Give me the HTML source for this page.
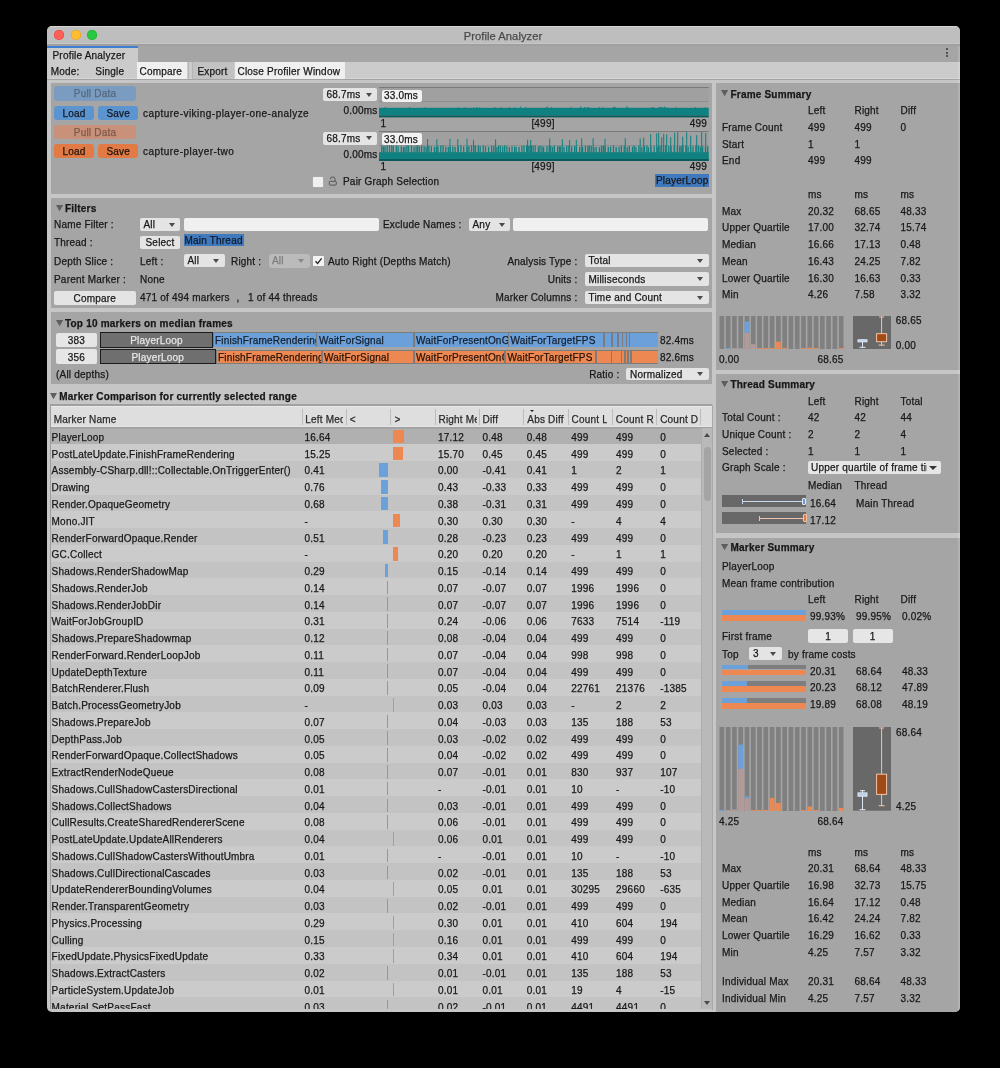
<!DOCTYPE html>
<html><head><meta charset="utf-8"><title>Profile Analyzer</title>
<style>
html,body{margin:0;padding:0;}
body{width:1000px;height:1068px;background:#000;position:relative;overflow:hidden;font-family:"Liberation Sans",sans-serif;font-size:10px;letter-spacing:0.2px;color:#181818;}
#win{position:absolute;left:47px;top:26px;width:913px;height:986px;border-radius:5px;overflow:hidden;background:#C6C6C6;}
#pg{position:absolute;left:-47px;top:-26px;width:1000px;height:1068px;will-change:transform;}
.a{position:absolute;}
.t{position:absolute;white-space:nowrap;-webkit-text-stroke:0.25px currentColor;}
.b{font-weight:bold;}

</style></head><body>
<div id="win"><div id="pg">
<div class="a" style="left:47px;top:26px;width:913.00px;height:18.30px;background:#BEBEBE;"></div>
<div class="a" style="left:47px;top:26px;width:913.00px;height:1.00px;background:#D6D6D6;"></div>
<div class="a" style="left:47px;top:43.4px;width:913.00px;height:0.90px;background:#C6C6C6;"></div>
<div class="a" style="left:47px;top:44.3px;width:913.00px;height:1.50px;background:#A0A0A0;"></div>
<div class="a" style="left:53.90px;top:30.10px;width:10px;height:10px;border-radius:50%;background:#FE5F57;box-shadow:inset 0 0 0 0.5px #E0443E;"></div>
<div class="a" style="left:70.65px;top:30.10px;width:10px;height:10px;border-radius:50%;background:#FEBC2E;box-shadow:inset 0 0 0 0.5px #DEA123;"></div>
<div class="a" style="left:87.40px;top:30.10px;width:10px;height:10px;border-radius:50%;background:#28C840;box-shadow:inset 0 0 0 0.5px #1AAB29;"></div>
<div class="t" style="left:400px;width:206.00px;top:29.50px;line-height:12px;text-align:center;font-size:11.2px;letter-spacing:0.05px;color:#4A4A4A;">Profile Analyzer</div>
<div class="a" style="left:47px;top:45.8px;width:913.00px;height:16.20px;background:#A5A5A5;"></div>
<div class="a" style="left:47px;top:47.6px;width:91.30px;height:14.40px;background:#CBCBCB;"></div>
<div class="a" style="left:47px;top:45.8px;width:91.30px;height:1.80px;background:#3F7FD0;"></div>
<div class="t" style="left:52.5px;top:49.90px;line-height:12px;">Profile Analyzer</div>
<div class="a" style="left:945.5px;top:48.10px;width:2.2px;height:2.2px;border-radius:50%;background:#3A3A3A;"></div>
<div class="a" style="left:945.5px;top:51.50px;width:2.2px;height:2.2px;border-radius:50%;background:#3A3A3A;"></div>
<div class="a" style="left:945.5px;top:54.90px;width:2.2px;height:2.2px;border-radius:50%;background:#3A3A3A;"></div>
<div class="a" style="left:47px;top:62px;width:913.00px;height:17.00px;background:#CBCBCB;"></div>
<div class="a" style="left:47px;top:77.6px;width:913.00px;height:0.90px;background:#D5D5D5;"></div>
<div class="a" style="left:47px;top:78.5px;width:913.00px;height:1.30px;background:#A3A3A3;"></div>
<div class="t" style="left:50.7px;top:66.30px;line-height:12px;">Mode:</div>
<div class="t" style="left:95.3px;top:66.00px;line-height:12px;">Single</div>
<div class="a" style="left:136.8px;top:62px;width:50.00px;height:17.00px;background:#EFEFEF;"></div>
<div class="t" style="left:139.5px;top:66.00px;line-height:12px;">Compare</div>
<div class="a" style="left:188px;top:62px;width:1.00px;height:17.00px;background:#B5B5B5;"></div>
<div class="a" style="left:192px;top:62px;width:1.00px;height:17.00px;background:#B5B5B5;"></div>
<div class="a" style="left:193px;top:62px;width:41.00px;height:17.00px;background:#C2C2C2;"></div>
<div class="t" style="left:197.5px;top:66.00px;line-height:12px;">Export</div>
<div class="a" style="left:235px;top:62px;width:110.20px;height:17.00px;background:#EFEFEF;"></div>
<div class="t" style="left:237.5px;top:66.00px;line-height:12px;">Close Profiler Window</div>
<div class="a" style="left:51px;top:83px;width:660.50px;height:110.50px;background:#A5A5A5;"></div>
<div class="a" style="left:51px;top:197.5px;width:660.50px;height:110.00px;background:#A5A5A5;"></div>
<div class="a" style="left:51px;top:312px;width:660.50px;height:72.00px;background:#A5A5A5;"></div>
<div class="a" style="left:716px;top:83px;width:244.00px;height:286.50px;background:#A5A5A5;"></div>
<div class="a" style="left:716px;top:374px;width:244.00px;height:159.00px;background:#A5A5A5;"></div>
<div class="a" style="left:716px;top:538px;width:244.00px;height:474.00px;background:#A5A5A5;"></div>
<div class="a" style="left:54px;top:86px;width:82.00px;height:14.50px;background:#7A9CC0;border-radius:3px;"></div>
<div class="t" style="left:54px;width:82.00px;top:88.15px;line-height:12px;text-align:center;color:#55687E;">Pull Data</div>
<div class="a" style="left:54px;top:105.5px;width:40.00px;height:14.30px;background:#5C94D0;border-radius:3px;"></div>
<div class="t" style="left:54px;width:40.00px;top:107.55px;line-height:12px;text-align:center;color:#141A22;">Load</div>
<div class="a" style="left:98.2px;top:105.5px;width:40.00px;height:14.30px;background:#5C94D0;border-radius:3px;"></div>
<div class="t" style="left:98.2px;width:40.00px;top:107.55px;line-height:12px;text-align:center;color:#141A22;">Save</div>
<div class="t" style="left:143px;top:107.8px;line-height:12px;width:166px;overflow:hidden;letter-spacing:0.47px;">capture-viking-player-one-analyzer</div>
<div class="a" style="left:54px;top:124.5px;width:82.00px;height:14.70px;background:#C9907A;border-radius:3px;"></div>
<div class="t" style="left:54px;width:82.00px;top:126.75px;line-height:12px;text-align:center;color:#7D5A4C;">Pull Data</div>
<div class="a" style="left:54px;top:144px;width:40.00px;height:14.00px;background:#E27A45;border-radius:3px;"></div>
<div class="t" style="left:54px;width:40.00px;top:145.90px;line-height:12px;text-align:center;color:#22140C;">Load</div>
<div class="a" style="left:98.2px;top:144px;width:40.00px;height:14.00px;background:#E27A45;border-radius:3px;"></div>
<div class="t" style="left:98.2px;width:40.00px;top:145.90px;line-height:12px;text-align:center;color:#22140C;">Save</div>
<div class="t" style="left:143px;top:146.00px;line-height:12px;letter-spacing:0.47px;">capture-player-two</div>
<svg class="a" style="left:378.8px;top:87.2px;" width="329.80" height="30.40" viewBox="0 0 329.80 30.40"><rect x="0" y="0" width="329.8" height="30.39999999999999" fill="#A0A0A0"/><rect x="0" y="0" width="329.8" height="1" fill="#7A7A7A"/><rect x="0" y="14.00" width="329.8" height="1" fill="#8E8E8E"/><rect x="0" y="20.80" width="329.8" height="7.60" fill="#0F8181"/><rect x="0" y="28.40" width="329.8" height="2" fill="#095A5A"/><rect x="78.78" y="20.13" width="1" height="1.17" fill="#0F8181"/><rect x="121.81" y="20.10" width="1" height="1.20" fill="#0F8181"/><rect x="205.18" y="20.37" width="1" height="0.93" fill="#0F8181"/><rect x="5.49" y="19.98" width="1" height="1.32" fill="#0F8181"/><rect x="85.75" y="20.28" width="1" height="1.02" fill="#0F8181"/><rect x="325.78" y="20.16" width="1" height="1.14" fill="#0F8181"/><rect x="273.89" y="20.16" width="1" height="1.14" fill="#0F8181"/><rect x="209.54" y="20.32" width="1" height="0.98" fill="#0F8181"/><rect x="208.16" y="19.97" width="1" height="1.33" fill="#0F8181"/><rect x="171.76" y="20.03" width="1" height="1.27" fill="#0F8181"/><rect x="220.08" y="20.37" width="1" height="0.93" fill="#0F8181"/><rect x="248.38" y="20.10" width="1" height="1.20" fill="#0F8181"/><rect x="99.41" y="20.38" width="1" height="0.92" fill="#0F8181"/><rect x="283.36" y="20.16" width="1" height="1.14" fill="#0F8181"/><rect x="235.54" y="19.96" width="1" height="1.34" fill="#0F8181"/><rect x="234.01" y="19.94" width="1" height="1.36" fill="#0F8181"/><rect x="129.96" y="20.00" width="1" height="1.30" fill="#0F8181"/><rect x="146.15" y="19.93" width="1" height="1.37" fill="#0F8181"/><rect x="287.71" y="20.35" width="1" height="0.95" fill="#0F8181"/><rect x="45.53" y="20.29" width="1" height="1.01" fill="#0F8181"/><rect x="315.95" y="20.18" width="1" height="1.12" fill="#0F8181"/><rect x="205.49" y="20.25" width="1" height="1.05" fill="#0F8181"/><rect x="166.56" y="20.21" width="1" height="1.09" fill="#0F8181"/><rect x="115.60" y="20.11" width="1" height="1.19" fill="#0F8181"/><rect x="191.67" y="19.95" width="1" height="1.35" fill="#0F8181"/><rect x="223.53" y="19.94" width="1" height="1.36" fill="#0F8181"/><rect x="280.39" y="19.90" width="1" height="1.40" fill="#0F8181"/><rect x="220.04" y="20.32" width="1" height="0.98" fill="#0F8181"/><rect x="281.77" y="19.92" width="1" height="1.38" fill="#0F8181"/><rect x="296.13" y="20.12" width="1" height="1.18" fill="#0F8181"/><rect x="233.90" y="20.29" width="1" height="1.01" fill="#0F8181"/><rect x="272.30" y="20.11" width="1" height="1.19" fill="#0F8181"/><rect x="94.10" y="20.37" width="1" height="0.93" fill="#0F8181"/><rect x="279.59" y="19.91" width="1" height="1.39" fill="#0F8181"/><rect x="30.06" y="20.00" width="1" height="1.30" fill="#0F8181"/><rect x="135.01" y="20.32" width="1" height="0.98" fill="#0F8181"/><rect x="97.01" y="20.02" width="1" height="1.28" fill="#0F8181"/><rect x="285.72" y="20.38" width="1" height="0.92" fill="#0F8181"/><rect x="201.54" y="20.38" width="1" height="0.92" fill="#0F8181"/><rect x="235.41" y="20.23" width="1" height="1.07" fill="#0F8181"/><rect x="141.20" y="19.40" width="0.8" height="1.90" fill="#0F8181"/><rect x="168.20" y="19.40" width="0.8" height="1.90" fill="#0F8181"/><rect x="201.20" y="19.40" width="0.8" height="1.90" fill="#0F8181"/><rect x="247.20" y="19.40" width="0.8" height="1.90" fill="#0F8181"/><rect x="285.20" y="19.40" width="0.8" height="1.90" fill="#0F8181"/></svg>
<svg class="a" style="left:378.8px;top:131px;" width="329.80" height="30.00" viewBox="0 0 329.80 30.00"><rect x="0" y="0" width="329.8" height="30" fill="#A0A0A0"/><rect x="0" y="0" width="329.8" height="1" fill="#7A7A7A"/><rect x="0" y="14.00" width="329.8" height="1" fill="#8E8E8E"/><rect x="0" y="21.20" width="329.8" height="6.80" fill="#0F8181"/><rect x="0" y="28.00" width="329.8" height="2" fill="#095A5A"/><rect x="2.20" y="14.88" width="1.3" height="6.82" fill="#0F8181"/><rect x="3.89" y="15.47" width="1.3" height="6.23" fill="#0F8181"/><rect x="5.42" y="15.26" width="1.3" height="6.44" fill="#0F8181"/><rect x="7.52" y="14.40" width="1.3" height="7.30" fill="#0F8181"/><rect x="9.88" y="14.37" width="1.3" height="7.33" fill="#0F8181"/><rect x="12.11" y="14.43" width="1.3" height="7.27" fill="#0F8181"/><rect x="13.68" y="15.06" width="1.3" height="6.64" fill="#0F8181"/><rect x="16.65" y="14.52" width="1.3" height="7.18" fill="#0F8181"/><rect x="18.47" y="15.43" width="1.3" height="6.27" fill="#0F8181"/><rect x="21.68" y="15.34" width="1.3" height="6.36" fill="#0F8181"/><rect x="23.83" y="16.06" width="1.3" height="5.64" fill="#0F8181"/><rect x="25.32" y="15.85" width="1.3" height="5.85" fill="#0F8181"/><rect x="27.27" y="14.56" width="1.3" height="7.14" fill="#0F8181"/><rect x="28.89" y="14.86" width="1.3" height="6.84" fill="#0F8181"/><rect x="31.84" y="14.63" width="1.3" height="7.07" fill="#0F8181"/><rect x="34.35" y="15.45" width="1.3" height="6.25" fill="#0F8181"/><rect x="36.45" y="15.29" width="1.3" height="6.41" fill="#0F8181"/><rect x="37.97" y="14.41" width="1.3" height="7.29" fill="#0F8181"/><rect x="39.77" y="15.52" width="1.3" height="6.18" fill="#0F8181"/><rect x="41.98" y="14.87" width="1.3" height="6.83" fill="#0F8181"/><rect x="44.49" y="15.12" width="1.3" height="6.58" fill="#0F8181"/><rect x="46.46" y="15.73" width="1.3" height="5.97" fill="#0F8181"/><rect x="49.19" y="14.74" width="1.3" height="6.96" fill="#0F8181"/><rect x="51.68" y="15.25" width="1.3" height="6.45" fill="#0F8181"/><rect x="54.74" y="15.61" width="1.3" height="6.09" fill="#0F8181"/><rect x="56.69" y="16.06" width="1.3" height="5.64" fill="#0F8181"/><rect x="58.31" y="15.05" width="1.3" height="6.65" fill="#0F8181"/><rect x="61.15" y="14.57" width="1.3" height="7.13" fill="#0F8181"/><rect x="63.48" y="14.37" width="1.3" height="7.33" fill="#0F8181"/><rect x="66.15" y="15.68" width="1.3" height="6.02" fill="#0F8181"/><rect x="68.64" y="15.88" width="1.3" height="5.82" fill="#0F8181"/><rect x="70.64" y="15.55" width="1.3" height="6.15" fill="#0F8181"/><rect x="73.16" y="15.34" width="1.3" height="6.36" fill="#0F8181"/><rect x="75.43" y="15.81" width="1.3" height="5.89" fill="#0F8181"/><rect x="78.63" y="15.15" width="1.3" height="6.55" fill="#0F8181"/><rect x="81.29" y="14.41" width="1.3" height="7.29" fill="#0F8181"/><rect x="84.02" y="15.46" width="1.3" height="6.24" fill="#0F8181"/><rect x="87.31" y="15.78" width="1.3" height="5.92" fill="#0F8181"/><rect x="89.25" y="14.99" width="1.3" height="6.71" fill="#0F8181"/><rect x="91.92" y="14.34" width="1.3" height="7.36" fill="#0F8181"/><rect x="94.20" y="14.60" width="1.3" height="7.10" fill="#0F8181"/><rect x="95.82" y="14.41" width="1.3" height="7.29" fill="#0F8181"/><rect x="98.68" y="14.53" width="1.3" height="7.17" fill="#0F8181"/><rect x="100.55" y="15.00" width="1.3" height="6.70" fill="#0F8181"/><rect x="103.60" y="14.45" width="1.3" height="7.25" fill="#0F8181"/><rect x="105.86" y="15.29" width="1.3" height="6.41" fill="#0F8181"/><rect x="108.94" y="15.77" width="1.3" height="5.93" fill="#0F8181"/><rect x="111.98" y="14.80" width="1.3" height="6.90" fill="#0F8181"/><rect x="114.17" y="14.95" width="1.3" height="6.75" fill="#0F8181"/><rect x="117.25" y="16.02" width="1.3" height="5.68" fill="#0F8181"/><rect x="118.93" y="14.62" width="1.3" height="7.08" fill="#0F8181"/><rect x="120.77" y="14.72" width="1.3" height="6.98" fill="#0F8181"/><rect x="123.10" y="15.36" width="1.3" height="6.34" fill="#0F8181"/><rect x="125.00" y="14.31" width="1.3" height="7.39" fill="#0F8181"/><rect x="127.19" y="14.96" width="1.3" height="6.74" fill="#0F8181"/><rect x="129.67" y="16.02" width="1.3" height="5.68" fill="#0F8181"/><rect x="132.38" y="15.23" width="1.3" height="6.47" fill="#0F8181"/><rect x="134.95" y="15.52" width="1.3" height="6.18" fill="#0F8181"/><rect x="136.46" y="15.92" width="1.3" height="5.78" fill="#0F8181"/><rect x="139.34" y="15.87" width="1.3" height="5.83" fill="#0F8181"/><rect x="142.25" y="15.01" width="1.3" height="6.69" fill="#0F8181"/><rect x="144.41" y="14.49" width="1.3" height="7.21" fill="#0F8181"/><rect x="147.02" y="14.41" width="1.3" height="7.29" fill="#0F8181"/><rect x="148.54" y="14.68" width="1.3" height="7.02" fill="#0F8181"/><rect x="150.25" y="14.91" width="1.3" height="6.79" fill="#0F8181"/><rect x="151.75" y="14.30" width="1.3" height="7.40" fill="#0F8181"/><rect x="153.44" y="14.48" width="1.3" height="7.22" fill="#0F8181"/><rect x="155.53" y="14.35" width="1.3" height="7.35" fill="#0F8181"/><rect x="158.59" y="15.41" width="1.3" height="6.29" fill="#0F8181"/><rect x="160.27" y="14.75" width="1.3" height="6.95" fill="#0F8181"/><rect x="162.33" y="14.96" width="1.3" height="6.74" fill="#0F8181"/><rect x="163.97" y="15.83" width="1.3" height="5.87" fill="#0F8181"/><rect x="167.25" y="15.14" width="1.3" height="6.56" fill="#0F8181"/><rect x="169.57" y="14.45" width="1.3" height="7.25" fill="#0F8181"/><rect x="171.17" y="14.92" width="1.3" height="6.78" fill="#0F8181"/><rect x="173.07" y="15.79" width="1.3" height="5.91" fill="#0F8181"/><rect x="174.78" y="14.34" width="1.3" height="7.36" fill="#0F8181"/><rect x="177.99" y="15.25" width="1.3" height="6.45" fill="#0F8181"/><rect x="179.66" y="15.28" width="1.3" height="6.42" fill="#0F8181"/><rect x="181.11" y="15.25" width="1.3" height="6.45" fill="#0F8181"/><rect x="184.37" y="15.85" width="1.3" height="5.85" fill="#0F8181"/><rect x="187.10" y="14.77" width="1.3" height="6.93" fill="#0F8181"/><rect x="189.19" y="14.60" width="1.3" height="7.10" fill="#0F8181"/><rect x="192.06" y="15.26" width="1.3" height="6.44" fill="#0F8181"/><rect x="194.94" y="14.89" width="1.3" height="6.81" fill="#0F8181"/><rect x="196.76" y="15.76" width="1.3" height="5.94" fill="#0F8181"/><rect x="200.04" y="15.83" width="1.3" height="5.87" fill="#0F8181"/><rect x="202.97" y="15.77" width="1.3" height="5.93" fill="#0F8181"/><rect x="205.77" y="14.71" width="1.3" height="6.99" fill="#0F8181"/><rect x="208.16" y="14.94" width="1.3" height="6.76" fill="#0F8181"/><rect x="209.61" y="14.35" width="1.3" height="7.35" fill="#0F8181"/><rect x="211.54" y="14.77" width="1.3" height="6.93" fill="#0F8181"/><rect x="214.26" y="16.02" width="1.3" height="5.68" fill="#0F8181"/><rect x="216.51" y="15.99" width="1.3" height="5.71" fill="#0F8181"/><rect x="219.79" y="16.02" width="1.3" height="5.68" fill="#0F8181"/><rect x="221.88" y="14.70" width="1.3" height="7.00" fill="#0F8181"/><rect x="223.71" y="14.65" width="1.3" height="7.05" fill="#0F8181"/><rect x="225.50" y="15.42" width="1.3" height="6.28" fill="#0F8181"/><rect x="228.61" y="15.81" width="1.3" height="5.89" fill="#0F8181"/><rect x="230.92" y="15.48" width="1.3" height="6.22" fill="#0F8181"/><rect x="233.84" y="14.45" width="1.3" height="7.25" fill="#0F8181"/><rect x="236.49" y="15.94" width="1.3" height="5.76" fill="#0F8181"/><rect x="239.38" y="15.65" width="1.3" height="6.05" fill="#0F8181"/><rect x="241.69" y="14.62" width="1.3" height="7.08" fill="#0F8181"/><rect x="244.59" y="14.90" width="1.3" height="6.80" fill="#0F8181"/><rect x="247.51" y="16.05" width="1.3" height="5.65" fill="#0F8181"/><rect x="249.66" y="15.02" width="1.3" height="6.68" fill="#0F8181"/><rect x="252.86" y="15.60" width="1.3" height="6.10" fill="#0F8181"/><rect x="254.58" y="14.53" width="1.3" height="7.17" fill="#0F8181"/><rect x="256.27" y="15.93" width="1.3" height="5.77" fill="#0F8181"/><rect x="259.20" y="14.56" width="1.3" height="7.14" fill="#0F8181"/><rect x="262.17" y="16.06" width="1.3" height="5.64" fill="#0F8181"/><rect x="264.82" y="14.93" width="1.3" height="6.77" fill="#0F8181"/><rect x="267.26" y="14.54" width="1.3" height="7.16" fill="#0F8181"/><rect x="268.69" y="16.05" width="1.3" height="5.65" fill="#0F8181"/><rect x="271.33" y="15.25" width="1.3" height="6.45" fill="#0F8181"/><rect x="274.50" y="15.08" width="1.3" height="6.62" fill="#0F8181"/><rect x="277.56" y="15.79" width="1.3" height="5.91" fill="#0F8181"/><rect x="279.36" y="14.75" width="1.3" height="6.95" fill="#0F8181"/><rect x="281.31" y="14.73" width="1.3" height="6.97" fill="#0F8181"/><rect x="283.83" y="14.77" width="1.3" height="6.93" fill="#0F8181"/><rect x="286.02" y="14.54" width="1.3" height="7.16" fill="#0F8181"/><rect x="289.15" y="14.94" width="1.3" height="6.76" fill="#0F8181"/><rect x="291.42" y="15.35" width="1.3" height="6.35" fill="#0F8181"/><rect x="294.54" y="15.06" width="1.3" height="6.64" fill="#0F8181"/><rect x="297.69" y="15.20" width="1.3" height="6.50" fill="#0F8181"/><rect x="300.10" y="15.24" width="1.3" height="6.46" fill="#0F8181"/><rect x="301.53" y="15.09" width="1.3" height="6.61" fill="#0F8181"/><rect x="303.28" y="14.31" width="1.3" height="7.39" fill="#0F8181"/><rect x="306.20" y="14.61" width="1.3" height="7.09" fill="#0F8181"/><rect x="308.50" y="15.61" width="1.3" height="6.09" fill="#0F8181"/><rect x="310.95" y="14.89" width="1.3" height="6.81" fill="#0F8181"/><rect x="313.34" y="15.30" width="1.3" height="6.40" fill="#0F8181"/><rect x="316.23" y="14.49" width="1.3" height="7.21" fill="#0F8181"/><rect x="318.69" y="14.75" width="1.3" height="6.95" fill="#0F8181"/><rect x="320.62" y="15.69" width="1.3" height="6.01" fill="#0F8181"/><rect x="322.98" y="15.31" width="1.3" height="6.39" fill="#0F8181"/><rect x="325.83" y="15.94" width="1.3" height="5.76" fill="#0F8181"/><rect x="328.07" y="15.40" width="1.3" height="6.30" fill="#0F8181"/><rect x="48.10" y="8.02" width="1" height="13.68" fill="#0F8181"/><rect x="57.40" y="8.39" width="1" height="13.31" fill="#0F8181"/><rect x="70.50" y="7.90" width="1" height="13.80" fill="#0F8181"/><rect x="78.30" y="8.07" width="1" height="13.63" fill="#0F8181"/><rect x="87.50" y="7.96" width="1" height="13.74" fill="#0F8181"/><rect x="94.00" y="8.88" width="1" height="12.82" fill="#0F8181"/><rect x="116.10" y="8.40" width="1" height="13.30" fill="#0F8181"/><rect x="148.10" y="8.75" width="1" height="12.95" fill="#0F8181"/><rect x="151.20" y="8.88" width="1" height="12.82" fill="#0F8181"/><rect x="170.20" y="7.52" width="1" height="14.18" fill="#0F8181"/><rect x="182.80" y="8.12" width="1" height="13.58" fill="#0F8181"/><rect x="190.20" y="8.89" width="1" height="12.81" fill="#0F8181"/><rect x="196.80" y="8.68" width="1" height="13.02" fill="#0F8181"/><rect x="202.20" y="7.27" width="1" height="14.43" fill="#0F8181"/><rect x="213.60" y="7.24" width="1" height="14.46" fill="#0F8181"/><rect x="225.50" y="7.88" width="1" height="13.82" fill="#0F8181"/><rect x="245.70" y="7.15" width="1" height="14.55" fill="#0F8181"/><rect x="260.70" y="7.48" width="1" height="14.22" fill="#0F8181"/><rect x="264.20" y="6.56" width="1" height="15.14" fill="#0F8181"/><rect x="271.20" y="2.98" width="1" height="18.72" fill="#0F8181"/><rect x="277.20" y="2.30" width="1" height="19.40" fill="#0F8181"/><rect x="279.20" y="1.62" width="1" height="20.08" fill="#0F8181"/><rect x="282.20" y="6.07" width="1" height="15.63" fill="#0F8181"/><rect x="284.20" y="2.70" width="1" height="19.00" fill="#0F8181"/><rect x="287.20" y="3.04" width="1" height="18.66" fill="#0F8181"/><rect x="291.20" y="6.14" width="1" height="15.56" fill="#0F8181"/><rect x="295.20" y="1.70" width="1" height="20.00" fill="#0F8181"/><rect x="298.20" y="1.19" width="1" height="20.51" fill="#0F8181"/><rect x="303.20" y="5.68" width="1" height="16.02" fill="#0F8181"/><rect x="307.20" y="1.28" width="1" height="20.42" fill="#0F8181"/><rect x="311.20" y="4.61" width="1" height="17.09" fill="#0F8181"/><rect x="317.20" y="4.08" width="1" height="17.62" fill="#0F8181"/><rect x="322.20" y="1.06" width="1" height="20.64" fill="#0F8181"/><rect x="326.20" y="2.01" width="1" height="19.69" fill="#0F8181"/></svg>
<div class="a" style="left:323px;top:88px;width:54.00px;height:13.00px;background:#E4E4E4;border-radius:2px;"></div>
<div class="t" style="left:326.5px;top:89.40px;line-height:12px;color:#181818;">68.7ms</div>
<div class="a" style="left:365.60px;top:92.90px;width:0;height:0;border-left:3.6px solid transparent;border-right:3.6px solid transparent;border-top:4px solid #4A4A4A;"></div>
<div class="a" style="left:323px;top:131.5px;width:54.00px;height:13.00px;background:#E4E4E4;border-radius:2px;"></div>
<div class="t" style="left:326.5px;top:132.90px;line-height:12px;color:#181818;">68.7ms</div>
<div class="a" style="left:365.60px;top:136.40px;width:0;height:0;border-left:3.6px solid transparent;border-right:3.6px solid transparent;border-top:4px solid #4A4A4A;"></div>
<div class="a" style="left:382px;top:89.6px;width:39.6px;height:12px;background:#F2F2F2;border-radius:2px;"></div>
<div class="t" style="left:384px;top:90.10px;line-height:12px;">33.0ms</div>
<div class="a" style="left:382px;top:133px;width:39.6px;height:12px;background:#F2F2F2;border-radius:2px;"></div>
<div class="t" style="left:384px;top:133.50px;line-height:12px;">33.0ms</div>
<div class="t" style="right:622.50px;top:105.00px;line-height:12px;text-align:right;">0.00ms</div>
<div class="t" style="right:622.50px;top:148.50px;line-height:12px;text-align:right;">0.00ms</div>
<div class="t" style="left:380.5px;top:117.70px;line-height:12px;">1</div>
<div class="t" style="left:380.5px;top:161.20px;line-height:12px;">1</div>
<div class="t" style="left:503px;width:80.00px;top:117.70px;line-height:12px;text-align:center;">[499]</div>
<div class="t" style="left:503px;width:80.00px;top:161.20px;line-height:12px;text-align:center;">[499]</div>
<div class="t" style="right:293.00px;top:117.70px;line-height:12px;text-align:right;">499</div>
<div class="t" style="right:293.00px;top:161.20px;line-height:12px;text-align:right;">499</div>
<div class="a" style="left:312.5px;top:176.9px;width:10.2px;height:9.8px;background:#F0F0F0;border-radius:0.8px;box-shadow:0 0 0 0.6px #B0B0B0;"></div>
<svg class="a" style="left:327px;top:175px;" width="11" height="12" viewBox="0 0 11 12"><path d="M3.3 4.3 A2.4 2.4 0 0 1 8.1 4.3 V6.3" fill="none" stroke="#555" stroke-width="1"/><rect x="2.3" y="6.3" width="7" height="3.8" rx="1" fill="none" stroke="#555" stroke-width="1"/></svg>
<div class="t" style="left:343px;top:176.00px;line-height:12px;">Pair Graph Selection</div>
<div class="a" style="left:655px;top:174px;width:54px;height:12.7px;background:#4079BE;"></div>
<div class="t" style="left:656px;top:175.10px;line-height:12px;">PlayerLoop</div>
<svg class="a" style="left:55.60px;top:205.05px;" width="7.2" height="6.3" viewBox="0 0 7.2 6.3"><path d="M0 0 H7.2 L3.6 6.3 Z" fill="#5E5E5E"/></svg>
<div class="t b" style="left:65px;top:202.70px;line-height:12px;">Filters</div>
<div class="t" style="left:54px;top:219.30px;line-height:12px;">Name Filter :</div>
<div class="a" style="left:140px;top:218px;width:40.00px;height:13.00px;background:#E4E4E4;border-radius:2px;"></div>
<div class="t" style="left:143.5px;top:219.40px;line-height:12px;color:#181818;">All</div>
<div class="a" style="left:168.60px;top:222.90px;width:0;height:0;border-left:3.6px solid transparent;border-right:3.6px solid transparent;border-top:4px solid #4A4A4A;"></div>
<div class="a" style="left:184px;top:217.5px;width:195.00px;height:13.50px;background:#F0F0F0;border-radius:2px;"></div>
<div class="t" style="left:383px;top:219.30px;line-height:12px;">Exclude Names :</div>
<div class="a" style="left:469px;top:218px;width:41.00px;height:13.00px;background:#E4E4E4;border-radius:2px;"></div>
<div class="t" style="left:472.5px;top:219.40px;line-height:12px;color:#181818;">Any</div>
<div class="a" style="left:498.60px;top:222.90px;width:0;height:0;border-left:3.6px solid transparent;border-right:3.6px solid transparent;border-top:4px solid #4A4A4A;"></div>
<div class="a" style="left:513px;top:218px;width:194.50px;height:13.00px;background:#F0F0F0;border-radius:2px;"></div>
<div class="t" style="left:54px;top:236.50px;line-height:12px;">Thread :</div>
<div class="a" style="left:140px;top:235.7px;width:40.00px;height:13.00px;background:#E4E4E4;border-radius:2px;"></div>
<div class="t" style="left:140px;width:40.00px;top:237.10px;line-height:12px;text-align:center;">Select</div>
<div class="a" style="left:184px;top:234px;width:60.00px;height:11.50px;background:#4079BE;"></div>
<div class="t" style="left:184.5px;top:234.70px;line-height:12px;color:#0E1A2A;">Main Thread</div>
<div class="t" style="left:54px;top:255.90px;line-height:12px;">Depth Slice :</div>
<div class="t" style="left:140px;top:255.90px;line-height:12px;">Left :</div>
<div class="a" style="left:184px;top:254px;width:40.50px;height:13.00px;background:#E4E4E4;border-radius:2px;"></div>
<div class="t" style="left:187.5px;top:255.40px;line-height:12px;color:#181818;">All</div>
<div class="a" style="left:213.10px;top:258.90px;width:0;height:0;border-left:3.6px solid transparent;border-right:3.6px solid transparent;border-top:4px solid #4A4A4A;"></div>
<div class="t" style="left:231px;top:255.90px;line-height:12px;">Right :</div>
<div class="a" style="left:268.5px;top:253.5px;width:41.00px;height:14.00px;background:#BBBBBB;border-radius:3px;"></div>
<div class="t" style="left:272.0px;top:255.40px;line-height:12px;color:#7C7C7C;">All</div>
<div class="a" style="left:298.10px;top:258.90px;width:0;height:0;border-left:3.6px solid transparent;border-right:3.6px solid transparent;border-top:4px solid #888888;"></div>
<div class="a" style="left:313px;top:255.5px;width:10.70px;height:10.10px;background:#F4F4F4;border-radius:0.8px;"></div>
<svg class="a" style="left:313px;top:255.5px;" width="11" height="10" viewBox="0 0 11 10"><path d="M2.5 5.2 L4.6 7.4 L8.6 2.4" fill="none" stroke="#222" stroke-width="1.3"/></svg>
<div class="t" style="left:328px;top:255.90px;line-height:12px;">Auto Right (Depths Match)</div>
<div class="t" style="right:422.50px;top:255.50px;line-height:12px;text-align:right;">Analysis Type :</div>
<div class="a" style="left:584.5px;top:253.75px;width:124.25px;height:13.25px;background:#E4E4E4;border-radius:2px;"></div>
<div class="t" style="left:588.5px;top:255.27px;line-height:12px;color:#181818;">Total</div>
<div class="a" style="left:697.35px;top:258.77px;width:0;height:0;border-left:3.6px solid transparent;border-right:3.6px solid transparent;border-top:4px solid #4A4A4A;"></div>
<div class="t" style="right:422.50px;top:273.70px;line-height:12px;text-align:right;">Units :</div>
<div class="a" style="left:584.5px;top:272px;width:124.25px;height:13.50px;background:#E4E4E4;border-radius:2px;"></div>
<div class="t" style="left:588.5px;top:273.65px;line-height:12px;color:#181818;">Milliseconds</div>
<div class="a" style="left:697.35px;top:277.15px;width:0;height:0;border-left:3.6px solid transparent;border-right:3.6px solid transparent;border-top:4px solid #4A4A4A;"></div>
<div class="t" style="right:422.50px;top:292.20px;line-height:12px;text-align:right;">Marker Columns :</div>
<div class="a" style="left:584.5px;top:290.75px;width:124.25px;height:13.00px;background:#E4E4E4;border-radius:2px;"></div>
<div class="t" style="left:588.5px;top:292.15px;line-height:12px;color:#181818;">Time and Count</div>
<div class="a" style="left:697.35px;top:295.65px;width:0;height:0;border-left:3.6px solid transparent;border-right:3.6px solid transparent;border-top:4px solid #4A4A4A;"></div>
<div class="t" style="left:54px;top:274.40px;line-height:12px;">Parent Marker :</div>
<div class="t" style="left:140px;top:274.40px;line-height:12px;">None</div>
<div class="a" style="left:54px;top:291px;width:81.50px;height:14.00px;background:#E4E4E4;border-radius:2px;"></div>
<div class="t" style="left:54px;width:81.50px;top:292.90px;line-height:12px;text-align:center;">Compare</div>
<div class="t" style="left:140px;top:292.40px;line-height:12px;">471 of 494 markers</div>
<div class="t" style="left:236.5px;top:292.40px;line-height:12px;">,</div>
<div class="t" style="left:248px;top:292.40px;line-height:12px;">1 of 44 threads</div>
<svg class="a" style="left:55.60px;top:320.45px;" width="7.2" height="6.3" viewBox="0 0 7.2 6.3"><path d="M0 0 H7.2 L3.6 6.3 Z" fill="#5E5E5E"/></svg>
<div class="t b" style="left:65px;top:318.10px;line-height:12px;">Top 10 markers on median frames</div>
<div class="a" style="left:56.4px;top:333.4px;width:40.20px;height:14.00px;background:#E6E6E6;border-radius:2px;"></div>
<div class="t" style="left:56.4px;width:40.20px;top:335.30px;line-height:12px;text-align:center;">383</div>
<div class="a" style="left:56.4px;top:349.4px;width:40.20px;height:15.00px;background:#E6E6E6;border-radius:2px;"></div>
<div class="t" style="left:56.4px;width:40.20px;top:351.80px;line-height:12px;text-align:center;">356</div>
<div class="a" style="left:213px;top:332px;width:445.20px;height:15.40px;background:#7C7C7C;"></div>
<div class="t" style="left:213.5px;top:332.90px;width:102.30px;height:13.80px;background:#6CA0DA;overflow:hidden;line-height:15.40px;color:#14202E;padding-left:1.5px;box-sizing:border-box;">FinishFrameRendering</div>
<div class="t" style="left:317.4px;top:332.90px;width:95.60px;height:13.80px;background:#6CA0DA;overflow:hidden;line-height:15.40px;color:#14202E;padding-left:1.5px;box-sizing:border-box;">WaitForSignal</div>
<div class="t" style="left:414.5px;top:332.90px;width:93.10px;height:13.80px;background:#6CA0DA;overflow:hidden;line-height:15.40px;color:#14202E;padding-left:1.5px;box-sizing:border-box;">WaitForPresentOnGfxThread</div>
<div class="t" style="left:509px;top:332.90px;width:94.20px;height:13.80px;background:#6CA0DA;overflow:hidden;line-height:15.40px;color:#14202E;padding-left:1.5px;box-sizing:border-box;">WaitForTargetFPS</div>
<div class="t" style="left:604.8px;top:332.90px;width:6.70px;height:13.80px;background:#6CA0DA;overflow:hidden;line-height:15.40px;color:#14202E;padding-left:1.5px;box-sizing:border-box;"></div>
<div class="t" style="left:612.9px;top:332.90px;width:4.50px;height:13.80px;background:#6CA0DA;overflow:hidden;line-height:15.40px;color:#14202E;padding-left:1.5px;box-sizing:border-box;"></div>
<div class="t" style="left:618.9px;top:332.90px;width:3.00px;height:13.80px;background:#6CA0DA;overflow:hidden;line-height:15.40px;color:#14202E;padding-left:1.5px;box-sizing:border-box;"></div>
<div class="t" style="left:623px;top:332.90px;width:3.10px;height:13.80px;background:#6CA0DA;overflow:hidden;line-height:15.40px;color:#14202E;padding-left:1.5px;box-sizing:border-box;"></div>
<div class="t" style="left:627px;top:332.90px;width:1.60px;height:13.80px;background:#6CA0DA;overflow:hidden;line-height:15.40px;color:#14202E;padding-left:1.5px;box-sizing:border-box;"></div>
<div class="t" style="left:630px;top:332.90px;width:28.20px;height:13.80px;background:#6CA0DA;overflow:hidden;line-height:15.40px;color:#14202E;padding-left:1.5px;box-sizing:border-box;"></div>
<div class="a" style="left:215.6px;top:349.6px;width:442.60px;height:14.40px;background:#7C7C7C;"></div>
<div class="t" style="left:216.5px;top:350.50px;width:104.80px;height:12.80px;background:#EE8852;overflow:hidden;line-height:14.40px;color:#2A1408;padding-left:1.5px;box-sizing:border-box;">FinishFrameRendering</div>
<div class="t" style="left:322.6px;top:350.50px;width:90.90px;height:12.80px;background:#EE8852;overflow:hidden;line-height:14.40px;color:#2A1408;padding-left:1.5px;box-sizing:border-box;">WaitForSignal</div>
<div class="t" style="left:414.5px;top:350.50px;width:89.50px;height:12.80px;background:#EE8852;overflow:hidden;line-height:14.40px;color:#2A1408;padding-left:1.5px;box-sizing:border-box;">WaitForPresentOnGfxThread</div>
<div class="t" style="left:506px;top:350.50px;width:88.90px;height:12.80px;background:#EE8852;overflow:hidden;line-height:14.40px;color:#2A1408;padding-left:1.5px;box-sizing:border-box;">WaitForTargetFPS</div>
<div class="t" style="left:596.5px;top:350.50px;width:14.40px;height:12.80px;background:#EE8852;overflow:hidden;line-height:14.40px;color:#2A1408;padding-left:1.5px;box-sizing:border-box;"></div>
<div class="t" style="left:612.2px;top:350.50px;width:8.80px;height:12.80px;background:#EE8852;overflow:hidden;line-height:14.40px;color:#2A1408;padding-left:1.5px;box-sizing:border-box;"></div>
<div class="t" style="left:622.2px;top:350.50px;width:1.90px;height:12.80px;background:#EE8852;overflow:hidden;line-height:14.40px;color:#2A1408;padding-left:1.5px;box-sizing:border-box;"></div>
<div class="t" style="left:625.8px;top:350.50px;width:1.70px;height:12.80px;background:#EE8852;overflow:hidden;line-height:14.40px;color:#2A1408;padding-left:1.5px;box-sizing:border-box;"></div>
<div class="t" style="left:628.9px;top:350.50px;width:1.10px;height:12.80px;background:#EE8852;overflow:hidden;line-height:14.40px;color:#2A1408;padding-left:1.5px;box-sizing:border-box;"></div>
<div class="t" style="left:631.5px;top:350.50px;width:26.70px;height:12.80px;background:#EE8852;overflow:hidden;line-height:14.40px;color:#2A1408;padding-left:1.5px;box-sizing:border-box;"></div>
<div class="a" style="left:100px;top:332.4px;width:113.00px;height:15.20px;background:#6F6F6F;box-sizing:border-box;border:1px solid #1C1C1C;"></div>
<div class="t" style="left:100px;width:113.00px;top:335.00px;line-height:12px;text-align:center;color:#E6E6E6;">PlayerLoop</div>
<div class="a" style="left:100px;top:349.4px;width:115.60px;height:15.00px;background:#6F6F6F;box-sizing:border-box;border:1px solid #1C1C1C;"></div>
<div class="t" style="left:100px;width:115.60px;top:351.90px;line-height:12px;text-align:center;color:#E6E6E6;">PlayerLoop</div>
<div class="t" style="left:660px;top:334.90px;line-height:12px;">82.4ms</div>
<div class="t" style="left:660px;top:351.90px;line-height:12px;">82.6ms</div>
<div class="t" style="left:56px;top:368.90px;line-height:12px;">(All depths)</div>
<div class="t" style="right:380.50px;top:368.90px;line-height:12px;text-align:right;">Ratio :</div>
<div class="a" style="left:626px;top:367.7px;width:82.60px;height:12.70px;background:#E4E4E4;border-radius:2px;"></div>
<div class="t" style="left:630px;top:368.95px;line-height:12px;color:#181818;">Normalized</div>
<div class="a" style="left:697.20px;top:372.45px;width:0;height:0;border-left:3.6px solid transparent;border-right:3.6px solid transparent;border-top:4px solid #4A4A4A;"></div>
<svg class="a" style="left:49.60px;top:393.05px;" width="7" height="6.3" viewBox="0 0 7 6.3"><path d="M0 0 H7 L3.5 6.3 Z" fill="#5E5E5E"/></svg>
<div class="t b" style="left:59.3px;top:390.90px;line-height:12px;">Marker Comparison for currently selected range</div>
<div class="a" style="left:49.5px;top:403.9px;width:662.90px;height:605.60px;background:#A0A0A0;"></div>
<div class="a" style="left:50.5px;top:405.6px;width:661.40px;height:21.70px;background:#DEDEDE;"></div>
<div class="a" style="left:50.5px;top:405.6px;width:661.40px;height:0.90px;background:#E9E9E9;"></div>
<div class="a" style="left:50.5px;top:426px;width:661.40px;height:1.00px;background:#E6E6E6;"></div>
<div class="a" style="left:301.6px;top:408.8px;width:1.00px;height:16.00px;background:#BCBCBC;"></div>
<div class="a" style="left:345.6px;top:408.8px;width:1.00px;height:16.00px;background:#BCBCBC;"></div>
<div class="a" style="left:389.9px;top:408.8px;width:1.00px;height:16.00px;background:#BCBCBC;"></div>
<div class="a" style="left:434.5px;top:408.8px;width:1.00px;height:16.00px;background:#BCBCBC;"></div>
<div class="a" style="left:478.6px;top:408.8px;width:1.00px;height:16.00px;background:#BCBCBC;"></div>
<div class="a" style="left:523.3px;top:408.8px;width:1.00px;height:16.00px;background:#BCBCBC;"></div>
<div class="a" style="left:567.5px;top:408.8px;width:1.00px;height:16.00px;background:#BCBCBC;"></div>
<div class="a" style="left:611.9px;top:408.8px;width:1.00px;height:16.00px;background:#BCBCBC;"></div>
<div class="a" style="left:656.3px;top:408.8px;width:1.00px;height:16.00px;background:#BCBCBC;"></div>
<div class="a" style="left:700.4px;top:408.8px;width:1.00px;height:16.00px;background:#BCBCBC;"></div>
<div class="t" style="left:53.8px;top:414.30px;line-height:12px;width:247.80px;overflow:hidden;color:#2A2A2A;">Marker Name</div>
<div class="t" style="left:305.3px;top:414.30px;line-height:12px;width:37.90px;overflow:hidden;color:#2A2A2A;">Left Median</div>
<div class="t" style="left:349.8px;top:414.30px;line-height:12px;width:39.20px;overflow:hidden;color:#2A2A2A;">&lt;</div>
<div class="t" style="left:394.5px;top:414.30px;line-height:12px;width:38.50px;overflow:hidden;color:#2A2A2A;">&gt;</div>
<div class="t" style="left:438.5px;top:414.30px;line-height:12px;width:38.30px;overflow:hidden;color:#2A2A2A;">Right Median</div>
<div class="t" style="left:482.5px;top:414.30px;line-height:12px;width:39.50px;overflow:hidden;color:#2A2A2A;">Diff</div>
<div class="t" style="left:527.3px;top:414.30px;line-height:12px;width:38.70px;overflow:hidden;color:#2A2A2A;">Abs Diff</div>
<div class="t" style="left:571.6px;top:414.30px;line-height:12px;width:35.90px;overflow:hidden;color:#2A2A2A;">Count Left</div>
<div class="t" style="left:615.8px;top:414.30px;line-height:12px;width:38.70px;overflow:hidden;color:#2A2A2A;">Count R</div>
<div class="t" style="left:660.2px;top:414.30px;line-height:12px;width:40.10px;overflow:hidden;color:#2A2A2A;">Count D</div>
<div class="a" style="left:529.6px;top:410.4px;width:0;height:0;border-left:2.2px solid transparent;border-right:2.2px solid transparent;border-top:2.8px solid #222;"></div>
<div class="a" style="left:50.5px;top:427.6px;width:651.00px;height:581.40px;overflow:hidden;">
<div class="a" style="left:0;top:0.00px;width:651px;height:17.05px;background:#B0B0B0;"></div>
<div class="t" style="left:1.10px;top:4.38px;line-height:12px;">PlayerLoop</div>
<div class="t" style="left:254.10px;top:4.38px;line-height:12px;">16.64</div>
<div class="t" style="left:387.50px;top:4.38px;line-height:12px;">17.12</div>
<div class="t" style="left:432.00px;top:4.38px;line-height:12px;">0.48</div>
<div class="t" style="left:476.30px;top:4.38px;line-height:12px;">0.48</div>
<div class="t" style="left:520.80px;top:4.38px;line-height:12px;">499</div>
<div class="t" style="left:565.60px;top:4.38px;line-height:12px;">499</div>
<div class="t" style="left:609.80px;top:4.38px;line-height:12px;">0</div>
<div class="a" style="left:342.80px;top:2.30px;width:10.66px;height:13.55px;background:#EE8852;"></div>
<div class="a" style="left:0;top:16.75px;width:651px;height:17.05px;background:#CBCBCB;"></div>
<div class="t" style="left:1.10px;top:21.13px;line-height:12px;">PostLateUpdate.FinishFrameRendering</div>
<div class="t" style="left:254.10px;top:21.13px;line-height:12px;">15.25</div>
<div class="t" style="left:387.50px;top:21.13px;line-height:12px;">15.70</div>
<div class="t" style="left:432.00px;top:21.13px;line-height:12px;">0.45</div>
<div class="t" style="left:476.30px;top:21.13px;line-height:12px;">0.45</div>
<div class="t" style="left:520.80px;top:21.13px;line-height:12px;">499</div>
<div class="t" style="left:565.60px;top:21.13px;line-height:12px;">499</div>
<div class="t" style="left:609.80px;top:21.13px;line-height:12px;">0</div>
<div class="a" style="left:342.80px;top:19.05px;width:9.99px;height:13.55px;background:#EE8852;"></div>
<div class="a" style="left:0;top:33.51px;width:651px;height:17.05px;background:#C3C3C3;"></div>
<div class="t" style="left:1.10px;top:37.89px;line-height:12px;">Assembly-CSharp.dll!::Collectable.OnTriggerEnter()</div>
<div class="t" style="left:254.10px;top:37.89px;line-height:12px;">0.41</div>
<div class="t" style="left:387.50px;top:37.89px;line-height:12px;">0.00</div>
<div class="t" style="left:432.00px;top:37.89px;line-height:12px;">-0.41</div>
<div class="t" style="left:476.30px;top:37.89px;line-height:12px;">0.41</div>
<div class="t" style="left:520.80px;top:37.89px;line-height:12px;">1</div>
<div class="t" style="left:565.60px;top:37.89px;line-height:12px;">2</div>
<div class="t" style="left:609.80px;top:37.89px;line-height:12px;">1</div>
<div class="a" style="left:328.60px;top:35.81px;width:9.10px;height:13.55px;background:#6CA0DA;"></div>
<div class="a" style="left:0;top:50.27px;width:651px;height:17.05px;background:#CBCBCB;"></div>
<div class="t" style="left:1.10px;top:54.64px;line-height:12px;">Drawing</div>
<div class="t" style="left:254.10px;top:54.64px;line-height:12px;">0.76</div>
<div class="t" style="left:387.50px;top:54.64px;line-height:12px;">0.43</div>
<div class="t" style="left:432.00px;top:54.64px;line-height:12px;">-0.33</div>
<div class="t" style="left:476.30px;top:54.64px;line-height:12px;">0.33</div>
<div class="t" style="left:520.80px;top:54.64px;line-height:12px;">499</div>
<div class="t" style="left:565.60px;top:54.64px;line-height:12px;">499</div>
<div class="t" style="left:609.80px;top:54.64px;line-height:12px;">0</div>
<div class="a" style="left:330.37px;top:52.56px;width:7.33px;height:13.55px;background:#6CA0DA;"></div>
<div class="a" style="left:0;top:67.02px;width:651px;height:17.05px;background:#C3C3C3;"></div>
<div class="t" style="left:1.10px;top:71.40px;line-height:12px;">Render.OpaqueGeometry</div>
<div class="t" style="left:254.10px;top:71.40px;line-height:12px;">0.68</div>
<div class="t" style="left:387.50px;top:71.40px;line-height:12px;">0.38</div>
<div class="t" style="left:432.00px;top:71.40px;line-height:12px;">-0.31</div>
<div class="t" style="left:476.30px;top:71.40px;line-height:12px;">0.31</div>
<div class="t" style="left:520.80px;top:71.40px;line-height:12px;">499</div>
<div class="t" style="left:565.60px;top:71.40px;line-height:12px;">499</div>
<div class="t" style="left:609.80px;top:71.40px;line-height:12px;">0</div>
<div class="a" style="left:330.82px;top:69.32px;width:6.88px;height:13.55px;background:#6CA0DA;"></div>
<div class="a" style="left:0;top:83.77px;width:651px;height:17.05px;background:#CBCBCB;"></div>
<div class="t" style="left:1.10px;top:88.15px;line-height:12px;">Mono.JIT</div>
<div class="t" style="left:254.10px;top:88.15px;line-height:12px;">-</div>
<div class="t" style="left:387.50px;top:88.15px;line-height:12px;">0.30</div>
<div class="t" style="left:432.00px;top:88.15px;line-height:12px;">0.30</div>
<div class="t" style="left:476.30px;top:88.15px;line-height:12px;">0.30</div>
<div class="t" style="left:520.80px;top:88.15px;line-height:12px;">-</div>
<div class="t" style="left:565.60px;top:88.15px;line-height:12px;">4</div>
<div class="t" style="left:609.80px;top:88.15px;line-height:12px;">4</div>
<div class="a" style="left:342.80px;top:86.07px;width:6.66px;height:13.55px;background:#EE8852;"></div>
<div class="a" style="left:0;top:100.53px;width:651px;height:17.05px;background:#C3C3C3;"></div>
<div class="t" style="left:1.10px;top:104.91px;line-height:12px;">RenderForwardOpaque.Render</div>
<div class="t" style="left:254.10px;top:104.91px;line-height:12px;">0.51</div>
<div class="t" style="left:387.50px;top:104.91px;line-height:12px;">0.28</div>
<div class="t" style="left:432.00px;top:104.91px;line-height:12px;">-0.23</div>
<div class="t" style="left:476.30px;top:104.91px;line-height:12px;">0.23</div>
<div class="t" style="left:520.80px;top:104.91px;line-height:12px;">499</div>
<div class="t" style="left:565.60px;top:104.91px;line-height:12px;">499</div>
<div class="t" style="left:609.80px;top:104.91px;line-height:12px;">0</div>
<div class="a" style="left:332.59px;top:102.83px;width:5.11px;height:13.55px;background:#6CA0DA;"></div>
<div class="a" style="left:0;top:117.28px;width:651px;height:17.05px;background:#CBCBCB;"></div>
<div class="t" style="left:1.10px;top:121.66px;line-height:12px;">GC.Collect</div>
<div class="t" style="left:254.10px;top:121.66px;line-height:12px;">-</div>
<div class="t" style="left:387.50px;top:121.66px;line-height:12px;">0.20</div>
<div class="t" style="left:432.00px;top:121.66px;line-height:12px;">0.20</div>
<div class="t" style="left:476.30px;top:121.66px;line-height:12px;">0.20</div>
<div class="t" style="left:520.80px;top:121.66px;line-height:12px;">-</div>
<div class="t" style="left:565.60px;top:121.66px;line-height:12px;">1</div>
<div class="t" style="left:609.80px;top:121.66px;line-height:12px;">1</div>
<div class="a" style="left:342.80px;top:119.58px;width:4.44px;height:13.55px;background:#EE8852;"></div>
<div class="a" style="left:0;top:134.04px;width:651px;height:17.05px;background:#C3C3C3;"></div>
<div class="t" style="left:1.10px;top:138.42px;line-height:12px;">Shadows.RenderShadowMap</div>
<div class="t" style="left:254.10px;top:138.42px;line-height:12px;">0.29</div>
<div class="t" style="left:387.50px;top:138.42px;line-height:12px;">0.15</div>
<div class="t" style="left:432.00px;top:138.42px;line-height:12px;">-0.14</div>
<div class="t" style="left:476.30px;top:138.42px;line-height:12px;">0.14</div>
<div class="t" style="left:520.80px;top:138.42px;line-height:12px;">499</div>
<div class="t" style="left:565.60px;top:138.42px;line-height:12px;">499</div>
<div class="t" style="left:609.80px;top:138.42px;line-height:12px;">0</div>
<div class="a" style="left:334.59px;top:136.34px;width:3.11px;height:13.55px;background:#6CA0DA;"></div>
<div class="a" style="left:0;top:150.79px;width:651px;height:17.05px;background:#CBCBCB;"></div>
<div class="t" style="left:1.10px;top:155.17px;line-height:12px;">Shadows.RenderJob</div>
<div class="t" style="left:254.10px;top:155.17px;line-height:12px;">0.14</div>
<div class="t" style="left:387.50px;top:155.17px;line-height:12px;">0.07</div>
<div class="t" style="left:432.00px;top:155.17px;line-height:12px;">-0.07</div>
<div class="t" style="left:476.30px;top:155.17px;line-height:12px;">0.07</div>
<div class="t" style="left:520.80px;top:155.17px;line-height:12px;">1996</div>
<div class="t" style="left:565.60px;top:155.17px;line-height:12px;">1996</div>
<div class="t" style="left:609.80px;top:155.17px;line-height:12px;">0</div>
<div class="a" style="left:336.15px;top:153.09px;width:1.55px;height:13.55px;background:#6CA0DA;"></div>
<div class="a" style="left:0;top:167.55px;width:651px;height:17.05px;background:#C3C3C3;"></div>
<div class="t" style="left:1.10px;top:171.93px;line-height:12px;">Shadows.RenderJobDir</div>
<div class="t" style="left:254.10px;top:171.93px;line-height:12px;">0.14</div>
<div class="t" style="left:387.50px;top:171.93px;line-height:12px;">0.07</div>
<div class="t" style="left:432.00px;top:171.93px;line-height:12px;">-0.07</div>
<div class="t" style="left:476.30px;top:171.93px;line-height:12px;">0.07</div>
<div class="t" style="left:520.80px;top:171.93px;line-height:12px;">1996</div>
<div class="t" style="left:565.60px;top:171.93px;line-height:12px;">1996</div>
<div class="t" style="left:609.80px;top:171.93px;line-height:12px;">0</div>
<div class="a" style="left:336.15px;top:169.85px;width:1.55px;height:13.55px;background:#6CA0DA;"></div>
<div class="a" style="left:0;top:184.30px;width:651px;height:17.05px;background:#CBCBCB;"></div>
<div class="t" style="left:1.10px;top:188.68px;line-height:12px;">WaitForJobGroupID</div>
<div class="t" style="left:254.10px;top:188.68px;line-height:12px;">0.31</div>
<div class="t" style="left:387.50px;top:188.68px;line-height:12px;">0.24</div>
<div class="t" style="left:432.00px;top:188.68px;line-height:12px;">-0.06</div>
<div class="t" style="left:476.30px;top:188.68px;line-height:12px;">0.06</div>
<div class="t" style="left:520.80px;top:188.68px;line-height:12px;">7633</div>
<div class="t" style="left:565.60px;top:188.68px;line-height:12px;">7514</div>
<div class="t" style="left:609.80px;top:188.68px;line-height:12px;">-119</div>
<div class="a" style="left:336.37px;top:186.60px;width:1.33px;height:13.55px;background:#6CA0DA;"></div>
<div class="a" style="left:0;top:201.06px;width:651px;height:17.05px;background:#C3C3C3;"></div>
<div class="t" style="left:1.10px;top:205.44px;line-height:12px;">Shadows.PrepareShadowmap</div>
<div class="t" style="left:254.10px;top:205.44px;line-height:12px;">0.12</div>
<div class="t" style="left:387.50px;top:205.44px;line-height:12px;">0.08</div>
<div class="t" style="left:432.00px;top:205.44px;line-height:12px;">-0.04</div>
<div class="t" style="left:476.30px;top:205.44px;line-height:12px;">0.04</div>
<div class="t" style="left:520.80px;top:205.44px;line-height:12px;">499</div>
<div class="t" style="left:565.60px;top:205.44px;line-height:12px;">499</div>
<div class="t" style="left:609.80px;top:205.44px;line-height:12px;">0</div>
<div class="a" style="left:336.70px;top:203.36px;width:1.00px;height:13.55px;background:#6CA0DA;"></div>
<div class="a" style="left:0;top:217.81px;width:651px;height:17.05px;background:#CBCBCB;"></div>
<div class="t" style="left:1.10px;top:222.19px;line-height:12px;">RenderForward.RenderLoopJob</div>
<div class="t" style="left:254.10px;top:222.19px;line-height:12px;">0.11</div>
<div class="t" style="left:387.50px;top:222.19px;line-height:12px;">0.07</div>
<div class="t" style="left:432.00px;top:222.19px;line-height:12px;">-0.04</div>
<div class="t" style="left:476.30px;top:222.19px;line-height:12px;">0.04</div>
<div class="t" style="left:520.80px;top:222.19px;line-height:12px;">998</div>
<div class="t" style="left:565.60px;top:222.19px;line-height:12px;">998</div>
<div class="t" style="left:609.80px;top:222.19px;line-height:12px;">0</div>
<div class="a" style="left:336.70px;top:220.12px;width:1.00px;height:13.55px;background:#6CA0DA;"></div>
<div class="a" style="left:0;top:234.57px;width:651px;height:17.05px;background:#C3C3C3;"></div>
<div class="t" style="left:1.10px;top:238.95px;line-height:12px;">UpdateDepthTexture</div>
<div class="t" style="left:254.10px;top:238.95px;line-height:12px;">0.11</div>
<div class="t" style="left:387.50px;top:238.95px;line-height:12px;">0.07</div>
<div class="t" style="left:432.00px;top:238.95px;line-height:12px;">-0.04</div>
<div class="t" style="left:476.30px;top:238.95px;line-height:12px;">0.04</div>
<div class="t" style="left:520.80px;top:238.95px;line-height:12px;">499</div>
<div class="t" style="left:565.60px;top:238.95px;line-height:12px;">499</div>
<div class="t" style="left:609.80px;top:238.95px;line-height:12px;">0</div>
<div class="a" style="left:336.70px;top:236.87px;width:1.00px;height:13.55px;background:#6CA0DA;"></div>
<div class="a" style="left:0;top:251.32px;width:651px;height:17.05px;background:#CBCBCB;"></div>
<div class="t" style="left:1.10px;top:255.70px;line-height:12px;">BatchRenderer.Flush</div>
<div class="t" style="left:254.10px;top:255.70px;line-height:12px;">0.09</div>
<div class="t" style="left:387.50px;top:255.70px;line-height:12px;">0.05</div>
<div class="t" style="left:432.00px;top:255.70px;line-height:12px;">-0.04</div>
<div class="t" style="left:476.30px;top:255.70px;line-height:12px;">0.04</div>
<div class="t" style="left:520.80px;top:255.70px;line-height:12px;">22761</div>
<div class="t" style="left:565.60px;top:255.70px;line-height:12px;">21376</div>
<div class="t" style="left:609.80px;top:255.70px;line-height:12px;">-1385</div>
<div class="a" style="left:336.70px;top:253.62px;width:1.00px;height:13.55px;background:#6CA0DA;"></div>
<div class="a" style="left:0;top:268.08px;width:651px;height:17.05px;background:#C3C3C3;"></div>
<div class="t" style="left:1.10px;top:272.46px;line-height:12px;">Batch.ProcessGeometryJob</div>
<div class="t" style="left:254.10px;top:272.46px;line-height:12px;">-</div>
<div class="t" style="left:387.50px;top:272.46px;line-height:12px;">0.03</div>
<div class="t" style="left:432.00px;top:272.46px;line-height:12px;">0.03</div>
<div class="t" style="left:476.30px;top:272.46px;line-height:12px;">0.03</div>
<div class="t" style="left:520.80px;top:272.46px;line-height:12px;">-</div>
<div class="t" style="left:565.60px;top:272.46px;line-height:12px;">2</div>
<div class="t" style="left:609.80px;top:272.46px;line-height:12px;">2</div>
<div class="a" style="left:342.80px;top:270.38px;width:1.00px;height:13.55px;background:#EE8852;"></div>
<div class="a" style="left:0;top:284.83px;width:651px;height:17.05px;background:#CBCBCB;"></div>
<div class="t" style="left:1.10px;top:289.21px;line-height:12px;">Shadows.PrepareJob</div>
<div class="t" style="left:254.10px;top:289.21px;line-height:12px;">0.07</div>
<div class="t" style="left:387.50px;top:289.21px;line-height:12px;">0.04</div>
<div class="t" style="left:432.00px;top:289.21px;line-height:12px;">-0.03</div>
<div class="t" style="left:476.30px;top:289.21px;line-height:12px;">0.03</div>
<div class="t" style="left:520.80px;top:289.21px;line-height:12px;">135</div>
<div class="t" style="left:565.60px;top:289.21px;line-height:12px;">188</div>
<div class="t" style="left:609.80px;top:289.21px;line-height:12px;">53</div>
<div class="a" style="left:336.70px;top:287.13px;width:1.00px;height:13.55px;background:#6CA0DA;"></div>
<div class="a" style="left:0;top:301.59px;width:651px;height:17.05px;background:#C3C3C3;"></div>
<div class="t" style="left:1.10px;top:305.97px;line-height:12px;">DepthPass.Job</div>
<div class="t" style="left:254.10px;top:305.97px;line-height:12px;">0.05</div>
<div class="t" style="left:387.50px;top:305.97px;line-height:12px;">0.03</div>
<div class="t" style="left:432.00px;top:305.97px;line-height:12px;">-0.02</div>
<div class="t" style="left:476.30px;top:305.97px;line-height:12px;">0.02</div>
<div class="t" style="left:520.80px;top:305.97px;line-height:12px;">499</div>
<div class="t" style="left:565.60px;top:305.97px;line-height:12px;">499</div>
<div class="t" style="left:609.80px;top:305.97px;line-height:12px;">0</div>
<div class="a" style="left:336.70px;top:303.89px;width:1.00px;height:13.55px;background:#6CA0DA;"></div>
<div class="a" style="left:0;top:318.34px;width:651px;height:17.05px;background:#CBCBCB;"></div>
<div class="t" style="left:1.10px;top:322.72px;line-height:12px;">RenderForwardOpaque.CollectShadows</div>
<div class="t" style="left:254.10px;top:322.72px;line-height:12px;">0.05</div>
<div class="t" style="left:387.50px;top:322.72px;line-height:12px;">0.04</div>
<div class="t" style="left:432.00px;top:322.72px;line-height:12px;">-0.02</div>
<div class="t" style="left:476.30px;top:322.72px;line-height:12px;">0.02</div>
<div class="t" style="left:520.80px;top:322.72px;line-height:12px;">499</div>
<div class="t" style="left:565.60px;top:322.72px;line-height:12px;">499</div>
<div class="t" style="left:609.80px;top:322.72px;line-height:12px;">0</div>
<div class="a" style="left:336.70px;top:320.64px;width:1.00px;height:13.55px;background:#6CA0DA;"></div>
<div class="a" style="left:0;top:335.10px;width:651px;height:17.05px;background:#C3C3C3;"></div>
<div class="t" style="left:1.10px;top:339.48px;line-height:12px;">ExtractRenderNodeQueue</div>
<div class="t" style="left:254.10px;top:339.48px;line-height:12px;">0.08</div>
<div class="t" style="left:387.50px;top:339.48px;line-height:12px;">0.07</div>
<div class="t" style="left:432.00px;top:339.48px;line-height:12px;">-0.01</div>
<div class="t" style="left:476.30px;top:339.48px;line-height:12px;">0.01</div>
<div class="t" style="left:520.80px;top:339.48px;line-height:12px;">830</div>
<div class="t" style="left:565.60px;top:339.48px;line-height:12px;">937</div>
<div class="t" style="left:609.80px;top:339.48px;line-height:12px;">107</div>
<div class="a" style="left:336.70px;top:337.40px;width:1.00px;height:13.55px;background:#6CA0DA;"></div>
<div class="a" style="left:0;top:351.85px;width:651px;height:17.05px;background:#CBCBCB;"></div>
<div class="t" style="left:1.10px;top:356.23px;line-height:12px;">Shadows.CullShadowCastersDirectional</div>
<div class="t" style="left:254.10px;top:356.23px;line-height:12px;">0.01</div>
<div class="t" style="left:387.50px;top:356.23px;line-height:12px;">-</div>
<div class="t" style="left:432.00px;top:356.23px;line-height:12px;">-0.01</div>
<div class="t" style="left:476.30px;top:356.23px;line-height:12px;">0.01</div>
<div class="t" style="left:520.80px;top:356.23px;line-height:12px;">10</div>
<div class="t" style="left:565.60px;top:356.23px;line-height:12px;">-</div>
<div class="t" style="left:609.80px;top:356.23px;line-height:12px;">-10</div>
<div class="a" style="left:336.70px;top:354.15px;width:1.00px;height:13.55px;background:#6CA0DA;"></div>
<div class="a" style="left:0;top:368.61px;width:651px;height:17.05px;background:#C3C3C3;"></div>
<div class="t" style="left:1.10px;top:372.99px;line-height:12px;">Shadows.CollectShadows</div>
<div class="t" style="left:254.10px;top:372.99px;line-height:12px;">0.04</div>
<div class="t" style="left:387.50px;top:372.99px;line-height:12px;">0.03</div>
<div class="t" style="left:432.00px;top:372.99px;line-height:12px;">-0.01</div>
<div class="t" style="left:476.30px;top:372.99px;line-height:12px;">0.01</div>
<div class="t" style="left:520.80px;top:372.99px;line-height:12px;">499</div>
<div class="t" style="left:565.60px;top:372.99px;line-height:12px;">499</div>
<div class="t" style="left:609.80px;top:372.99px;line-height:12px;">0</div>
<div class="a" style="left:336.70px;top:370.91px;width:1.00px;height:13.55px;background:#6CA0DA;"></div>
<div class="a" style="left:0;top:385.36px;width:651px;height:17.05px;background:#CBCBCB;"></div>
<div class="t" style="left:1.10px;top:389.74px;line-height:12px;">CullResults.CreateSharedRendererScene</div>
<div class="t" style="left:254.10px;top:389.74px;line-height:12px;">0.08</div>
<div class="t" style="left:387.50px;top:389.74px;line-height:12px;">0.06</div>
<div class="t" style="left:432.00px;top:389.74px;line-height:12px;">-0.01</div>
<div class="t" style="left:476.30px;top:389.74px;line-height:12px;">0.01</div>
<div class="t" style="left:520.80px;top:389.74px;line-height:12px;">499</div>
<div class="t" style="left:565.60px;top:389.74px;line-height:12px;">499</div>
<div class="t" style="left:609.80px;top:389.74px;line-height:12px;">0</div>
<div class="a" style="left:336.70px;top:387.66px;width:1.00px;height:13.55px;background:#6CA0DA;"></div>
<div class="a" style="left:0;top:402.12px;width:651px;height:17.05px;background:#C3C3C3;"></div>
<div class="t" style="left:1.10px;top:406.50px;line-height:12px;">PostLateUpdate.UpdateAllRenderers</div>
<div class="t" style="left:254.10px;top:406.50px;line-height:12px;">0.04</div>
<div class="t" style="left:387.50px;top:406.50px;line-height:12px;">0.06</div>
<div class="t" style="left:432.00px;top:406.50px;line-height:12px;">0.01</div>
<div class="t" style="left:476.30px;top:406.50px;line-height:12px;">0.01</div>
<div class="t" style="left:520.80px;top:406.50px;line-height:12px;">499</div>
<div class="t" style="left:565.60px;top:406.50px;line-height:12px;">499</div>
<div class="t" style="left:609.80px;top:406.50px;line-height:12px;">0</div>
<div class="a" style="left:342.80px;top:404.42px;width:1.00px;height:13.55px;background:#EE8852;"></div>
<div class="a" style="left:0;top:418.88px;width:651px;height:17.05px;background:#CBCBCB;"></div>
<div class="t" style="left:1.10px;top:423.25px;line-height:12px;">Shadows.CullShadowCastersWithoutUmbra</div>
<div class="t" style="left:254.10px;top:423.25px;line-height:12px;">0.01</div>
<div class="t" style="left:387.50px;top:423.25px;line-height:12px;">-</div>
<div class="t" style="left:432.00px;top:423.25px;line-height:12px;">-0.01</div>
<div class="t" style="left:476.30px;top:423.25px;line-height:12px;">0.01</div>
<div class="t" style="left:520.80px;top:423.25px;line-height:12px;">10</div>
<div class="t" style="left:565.60px;top:423.25px;line-height:12px;">-</div>
<div class="t" style="left:609.80px;top:423.25px;line-height:12px;">-10</div>
<div class="a" style="left:336.70px;top:421.18px;width:1.00px;height:13.55px;background:#6CA0DA;"></div>
<div class="a" style="left:0;top:435.63px;width:651px;height:17.05px;background:#C3C3C3;"></div>
<div class="t" style="left:1.10px;top:440.01px;line-height:12px;">Shadows.CullDirectionalCascades</div>
<div class="t" style="left:254.10px;top:440.01px;line-height:12px;">0.03</div>
<div class="t" style="left:387.50px;top:440.01px;line-height:12px;">0.02</div>
<div class="t" style="left:432.00px;top:440.01px;line-height:12px;">-0.01</div>
<div class="t" style="left:476.30px;top:440.01px;line-height:12px;">0.01</div>
<div class="t" style="left:520.80px;top:440.01px;line-height:12px;">135</div>
<div class="t" style="left:565.60px;top:440.01px;line-height:12px;">188</div>
<div class="t" style="left:609.80px;top:440.01px;line-height:12px;">53</div>
<div class="a" style="left:336.70px;top:437.93px;width:1.00px;height:13.55px;background:#6CA0DA;"></div>
<div class="a" style="left:0;top:452.38px;width:651px;height:17.05px;background:#CBCBCB;"></div>
<div class="t" style="left:1.10px;top:456.76px;line-height:12px;">UpdateRendererBoundingVolumes</div>
<div class="t" style="left:254.10px;top:456.76px;line-height:12px;">0.04</div>
<div class="t" style="left:387.50px;top:456.76px;line-height:12px;">0.05</div>
<div class="t" style="left:432.00px;top:456.76px;line-height:12px;">0.01</div>
<div class="t" style="left:476.30px;top:456.76px;line-height:12px;">0.01</div>
<div class="t" style="left:520.80px;top:456.76px;line-height:12px;">30295</div>
<div class="t" style="left:565.60px;top:456.76px;line-height:12px;">29660</div>
<div class="t" style="left:609.80px;top:456.76px;line-height:12px;">-635</div>
<div class="a" style="left:342.80px;top:454.69px;width:1.00px;height:13.55px;background:#EE8852;"></div>
<div class="a" style="left:0;top:469.14px;width:651px;height:17.05px;background:#C3C3C3;"></div>
<div class="t" style="left:1.10px;top:473.52px;line-height:12px;">Render.TransparentGeometry</div>
<div class="t" style="left:254.10px;top:473.52px;line-height:12px;">0.03</div>
<div class="t" style="left:387.50px;top:473.52px;line-height:12px;">0.02</div>
<div class="t" style="left:432.00px;top:473.52px;line-height:12px;">-0.01</div>
<div class="t" style="left:476.30px;top:473.52px;line-height:12px;">0.01</div>
<div class="t" style="left:520.80px;top:473.52px;line-height:12px;">499</div>
<div class="t" style="left:565.60px;top:473.52px;line-height:12px;">499</div>
<div class="t" style="left:609.80px;top:473.52px;line-height:12px;">0</div>
<div class="a" style="left:336.70px;top:471.44px;width:1.00px;height:13.55px;background:#6CA0DA;"></div>
<div class="a" style="left:0;top:485.89px;width:651px;height:17.05px;background:#CBCBCB;"></div>
<div class="t" style="left:1.10px;top:490.27px;line-height:12px;">Physics.Processing</div>
<div class="t" style="left:254.10px;top:490.27px;line-height:12px;">0.29</div>
<div class="t" style="left:387.50px;top:490.27px;line-height:12px;">0.30</div>
<div class="t" style="left:432.00px;top:490.27px;line-height:12px;">0.01</div>
<div class="t" style="left:476.30px;top:490.27px;line-height:12px;">0.01</div>
<div class="t" style="left:520.80px;top:490.27px;line-height:12px;">410</div>
<div class="t" style="left:565.60px;top:490.27px;line-height:12px;">604</div>
<div class="t" style="left:609.80px;top:490.27px;line-height:12px;">194</div>
<div class="a" style="left:342.80px;top:488.19px;width:1.00px;height:13.55px;background:#EE8852;"></div>
<div class="a" style="left:0;top:502.65px;width:651px;height:17.05px;background:#C3C3C3;"></div>
<div class="t" style="left:1.10px;top:507.03px;line-height:12px;">Culling</div>
<div class="t" style="left:254.10px;top:507.03px;line-height:12px;">0.15</div>
<div class="t" style="left:387.50px;top:507.03px;line-height:12px;">0.16</div>
<div class="t" style="left:432.00px;top:507.03px;line-height:12px;">0.01</div>
<div class="t" style="left:476.30px;top:507.03px;line-height:12px;">0.01</div>
<div class="t" style="left:520.80px;top:507.03px;line-height:12px;">499</div>
<div class="t" style="left:565.60px;top:507.03px;line-height:12px;">499</div>
<div class="t" style="left:609.80px;top:507.03px;line-height:12px;">0</div>
<div class="a" style="left:342.80px;top:504.95px;width:1.00px;height:13.55px;background:#EE8852;"></div>
<div class="a" style="left:0;top:519.40px;width:651px;height:17.05px;background:#CBCBCB;"></div>
<div class="t" style="left:1.10px;top:523.78px;line-height:12px;">FixedUpdate.PhysicsFixedUpdate</div>
<div class="t" style="left:254.10px;top:523.78px;line-height:12px;">0.33</div>
<div class="t" style="left:387.50px;top:523.78px;line-height:12px;">0.34</div>
<div class="t" style="left:432.00px;top:523.78px;line-height:12px;">0.01</div>
<div class="t" style="left:476.30px;top:523.78px;line-height:12px;">0.01</div>
<div class="t" style="left:520.80px;top:523.78px;line-height:12px;">410</div>
<div class="t" style="left:565.60px;top:523.78px;line-height:12px;">604</div>
<div class="t" style="left:609.80px;top:523.78px;line-height:12px;">194</div>
<div class="a" style="left:342.80px;top:521.70px;width:1.00px;height:13.55px;background:#EE8852;"></div>
<div class="a" style="left:0;top:536.16px;width:651px;height:17.05px;background:#C3C3C3;"></div>
<div class="t" style="left:1.10px;top:540.54px;line-height:12px;">Shadows.ExtractCasters</div>
<div class="t" style="left:254.10px;top:540.54px;line-height:12px;">0.02</div>
<div class="t" style="left:387.50px;top:540.54px;line-height:12px;">0.01</div>
<div class="t" style="left:432.00px;top:540.54px;line-height:12px;">-0.01</div>
<div class="t" style="left:476.30px;top:540.54px;line-height:12px;">0.01</div>
<div class="t" style="left:520.80px;top:540.54px;line-height:12px;">135</div>
<div class="t" style="left:565.60px;top:540.54px;line-height:12px;">188</div>
<div class="t" style="left:609.80px;top:540.54px;line-height:12px;">53</div>
<div class="a" style="left:336.70px;top:538.46px;width:1.00px;height:13.55px;background:#6CA0DA;"></div>
<div class="a" style="left:0;top:552.91px;width:651px;height:17.05px;background:#CBCBCB;"></div>
<div class="t" style="left:1.10px;top:557.29px;line-height:12px;">ParticleSystem.UpdateJob</div>
<div class="t" style="left:254.10px;top:557.29px;line-height:12px;">0.01</div>
<div class="t" style="left:387.50px;top:557.29px;line-height:12px;">0.01</div>
<div class="t" style="left:432.00px;top:557.29px;line-height:12px;">0.01</div>
<div class="t" style="left:476.30px;top:557.29px;line-height:12px;">0.01</div>
<div class="t" style="left:520.80px;top:557.29px;line-height:12px;">19</div>
<div class="t" style="left:565.60px;top:557.29px;line-height:12px;">4</div>
<div class="t" style="left:609.80px;top:557.29px;line-height:12px;">-15</div>
<div class="a" style="left:342.80px;top:555.21px;width:1.00px;height:13.55px;background:#EE8852;"></div>
<div class="a" style="left:0;top:569.67px;width:651px;height:17.05px;background:#C3C3C3;"></div>
<div class="t" style="left:1.10px;top:574.05px;line-height:12px;">Material.SetPassFast</div>
<div class="t" style="left:254.10px;top:574.05px;line-height:12px;">0.03</div>
<div class="t" style="left:387.50px;top:574.05px;line-height:12px;">0.02</div>
<div class="t" style="left:432.00px;top:574.05px;line-height:12px;">-0.01</div>
<div class="t" style="left:476.30px;top:574.05px;line-height:12px;">0.01</div>
<div class="t" style="left:520.80px;top:574.05px;line-height:12px;">4491</div>
<div class="t" style="left:565.60px;top:574.05px;line-height:12px;">4491</div>
<div class="t" style="left:609.80px;top:574.05px;line-height:12px;">0</div>
<div class="a" style="left:336.70px;top:571.97px;width:1.00px;height:13.55px;background:#6CA0DA;"></div>
<div class="a" style="left:0;top:0;width:651px;height:1px;background:#A6A6A6;"></div>
</div>
<div class="a" style="left:701.2px;top:427.6px;width:11.00px;height:581.40px;background:#B9B9B9;"></div>
<div class="a" style="left:701.2px;top:427.6px;width:0.80px;height:581.40px;background:#ADADAD;"></div>
<div class="a" style="left:712.2px;top:404.5px;width:0.90px;height:605.00px;background:#A9A9A9;"></div>
<div class="a" style="left:703.6px;top:447.2px;width:7px;height:54.3px;background:#A4A4A4;border-radius:3.5px;"></div>
<div class="a" style="left:703.8px;top:432.6px;width:0;height:0;border-left:3.3px solid transparent;border-right:3.3px solid transparent;border-bottom:4px solid #4A4A4A;"></div>
<div class="a" style="left:703.8px;top:1000.6px;width:0;height:0;border-left:3.3px solid transparent;border-right:3.3px solid transparent;border-top:4px solid #4A4A4A;"></div>
<svg class="a" style="left:720.60px;top:90.45px;" width="7.2" height="6.3" viewBox="0 0 7.2 6.3"><path d="M0 0 H7.2 L3.6 6.3 Z" fill="#5E5E5E"/></svg>
<div class="t b" style="left:730.5px;top:88.50px;line-height:12px;">Frame Summary</div>
<div class="t" style="left:808px;top:105.30px;line-height:12px;">Left</div>
<div class="t" style="left:854.5px;top:105.30px;line-height:12px;">Right</div>
<div class="t" style="left:900.5px;top:105.30px;line-height:12px;">Diff</div>
<div class="t" style="left:722px;top:121.80px;line-height:12px;">Frame Count</div>
<div class="t" style="left:808px;top:121.80px;line-height:12px;">499</div>
<div class="t" style="left:854.5px;top:121.80px;line-height:12px;">499</div>
<div class="t" style="left:900.5px;top:121.80px;line-height:12px;">0</div>
<div class="t" style="left:722px;top:138.60px;line-height:12px;">Start</div>
<div class="t" style="left:808px;top:138.60px;line-height:12px;">1</div>
<div class="t" style="left:854.5px;top:138.60px;line-height:12px;">1</div>
<div class="t" style="left:722px;top:155.30px;line-height:12px;">End</div>
<div class="t" style="left:808px;top:155.30px;line-height:12px;">499</div>
<div class="t" style="left:854.5px;top:155.30px;line-height:12px;">499</div>
<div class="t" style="left:808px;top:189.30px;line-height:12px;">ms</div>
<div class="t" style="left:854.5px;top:189.30px;line-height:12px;">ms</div>
<div class="t" style="left:900.5px;top:189.30px;line-height:12px;">ms</div>
<div class="t" style="left:722px;top:205.60px;line-height:12px;">Max</div>
<div class="t" style="left:808px;top:205.60px;line-height:12px;">20.32</div>
<div class="t" style="left:854.5px;top:205.60px;line-height:12px;">68.65</div>
<div class="t" style="left:900.5px;top:205.60px;line-height:12px;">48.33</div>
<div class="t" style="left:722px;top:222.35px;line-height:12px;">Upper Quartile</div>
<div class="t" style="left:808px;top:222.35px;line-height:12px;">17.00</div>
<div class="t" style="left:854.5px;top:222.35px;line-height:12px;">32.74</div>
<div class="t" style="left:900.5px;top:222.35px;line-height:12px;">15.74</div>
<div class="t" style="left:722px;top:239.10px;line-height:12px;">Median</div>
<div class="t" style="left:808px;top:239.10px;line-height:12px;">16.66</div>
<div class="t" style="left:854.5px;top:239.10px;line-height:12px;">17.13</div>
<div class="t" style="left:900.5px;top:239.10px;line-height:12px;">0.48</div>
<div class="t" style="left:722px;top:255.85px;line-height:12px;">Mean</div>
<div class="t" style="left:808px;top:255.85px;line-height:12px;">16.43</div>
<div class="t" style="left:854.5px;top:255.85px;line-height:12px;">24.25</div>
<div class="t" style="left:900.5px;top:255.85px;line-height:12px;">7.82</div>
<div class="t" style="left:722px;top:272.60px;line-height:12px;">Lower Quartile</div>
<div class="t" style="left:808px;top:272.60px;line-height:12px;">16.30</div>
<div class="t" style="left:854.5px;top:272.60px;line-height:12px;">16.63</div>
<div class="t" style="left:900.5px;top:272.60px;line-height:12px;">0.33</div>
<div class="t" style="left:722px;top:289.35px;line-height:12px;">Min</div>
<div class="t" style="left:808px;top:289.35px;line-height:12px;">4.26</div>
<div class="t" style="left:854.5px;top:289.35px;line-height:12px;">7.58</div>
<div class="t" style="left:900.5px;top:289.35px;line-height:12px;">3.32</div>
<svg class="a" style="left:719px;top:315.85px;" width="128" height="33.35" viewBox="0 0 128 33.35"><rect x="0.50" y="0" width="4.7" height="33.35" fill="#808080"/><rect x="6.78" y="0" width="4.7" height="33.35" fill="#808080"/><rect x="6.78" y="32.05" width="4.7" height="1.30" fill="#6CA0DA"/><rect x="13.06" y="0" width="4.7" height="33.35" fill="#808080"/><rect x="13.06" y="32.25" width="4.7" height="1.10" fill="#B39A98"/><rect x="19.34" y="0" width="4.7" height="33.35" fill="#808080"/><rect x="19.34" y="32.25" width="4.7" height="1.10" fill="#B39A98"/><rect x="25.62" y="0" width="4.7" height="33.35" fill="#808080"/><rect x="25.62" y="5.55" width="4.7" height="11.10" fill="#6CA0DA"/><rect x="25.62" y="16.65" width="4.7" height="16.70" fill="#B39A98"/><rect x="31.90" y="0" width="4.7" height="33.35" fill="#808080"/><rect x="31.90" y="28.25" width="4.7" height="5.10" fill="#B39A98"/><rect x="38.18" y="0" width="4.7" height="33.35" fill="#808080"/><rect x="38.18" y="32.05" width="4.7" height="1.30" fill="#EE8852"/><rect x="44.46" y="0" width="4.7" height="33.35" fill="#808080"/><rect x="44.46" y="32.05" width="4.7" height="1.30" fill="#EE8852"/><rect x="50.74" y="0" width="4.7" height="33.35" fill="#808080"/><rect x="50.74" y="32.05" width="4.7" height="1.30" fill="#EE8852"/><rect x="57.02" y="0" width="4.7" height="33.35" fill="#808080"/><rect x="57.02" y="25.65" width="4.7" height="7.70" fill="#EE8852"/><rect x="63.30" y="0" width="4.7" height="33.35" fill="#808080"/><rect x="63.30" y="32.05" width="4.7" height="1.30" fill="#EE8852"/><rect x="69.58" y="0" width="4.7" height="33.35" fill="#808080"/><rect x="75.86" y="0" width="4.7" height="33.35" fill="#808080"/><rect x="82.14" y="0" width="4.7" height="33.35" fill="#808080"/><rect x="82.14" y="32.05" width="4.7" height="1.30" fill="#EE8852"/><rect x="88.42" y="0" width="4.7" height="33.35" fill="#808080"/><rect x="88.42" y="31.75" width="4.7" height="1.60" fill="#EE8852"/><rect x="94.70" y="0" width="4.7" height="33.35" fill="#808080"/><rect x="94.70" y="32.05" width="4.7" height="1.30" fill="#EE8852"/><rect x="100.98" y="0" width="4.7" height="33.35" fill="#808080"/><rect x="107.26" y="0" width="4.7" height="33.35" fill="#808080"/><rect x="113.54" y="0" width="4.7" height="33.35" fill="#808080"/><rect x="119.82" y="0" width="4.7" height="33.35" fill="#808080"/><rect x="119.82" y="32.05" width="4.7" height="1.30" fill="#EE8852"/></svg>
<div class="t" style="left:719px;top:353.60px;line-height:12px;">0.00</div>
<div class="t" style="right:156.50px;top:353.60px;line-height:12px;text-align:right;">68.65</div>
<svg class="a" style="left:853px;top:315.8px;" width="38" height="33.00" viewBox="0 0 38 33.00"><rect x="0" y="0" width="38" height="33.00" fill="#686868"/><line x1="9.5" y1="23.80" x2="9.5" y2="31.80" stroke="#DDE8F5" stroke-width="1"/><line x1="7.0" y1="24.30" x2="12.0" y2="24.30" stroke="#DDE8F5" stroke-width="1"/><line x1="6.5" y1="31.30" x2="12.5" y2="31.30" stroke="#DDE8F5" stroke-width="1"/><rect x="5.00" y="23.80" width="9" height="2.00" fill="#B8CDE8" stroke="#DDE8F5" stroke-width="1"/><line x1="28.6" y1="0.50" x2="28.6" y2="29.60" stroke="#F3C4AA" stroke-width="1"/><line x1="26.1" y1="1.00" x2="31.1" y2="1.00" stroke="#F3C4AA" stroke-width="1"/><line x1="25.6" y1="29.10" x2="31.6" y2="29.10" stroke="#F3C4AA" stroke-width="1"/><rect x="23.60" y="17.70" width="10" height="8.00" fill="#A04A14" stroke="#F3C4AA" stroke-width="1"/></svg>
<div class="t" style="left:895.8px;top:315.30px;line-height:12px;">68.65</div>
<div class="t" style="left:895.8px;top:339.50px;line-height:12px;">0.00</div>
<svg class="a" style="left:720.60px;top:381.05px;" width="7.2" height="6.3" viewBox="0 0 7.2 6.3"><path d="M0 0 H7.2 L3.6 6.3 Z" fill="#5E5E5E"/></svg>
<div class="t b" style="left:730.5px;top:379.00px;line-height:12px;">Thread Summary</div>
<div class="t" style="left:808px;top:396.10px;line-height:12px;">Left</div>
<div class="t" style="left:854.5px;top:396.10px;line-height:12px;">Right</div>
<div class="t" style="left:900.5px;top:396.10px;line-height:12px;">Total</div>
<div class="t" style="left:722px;top:412.40px;line-height:12px;">Total Count :</div>
<div class="t" style="left:808px;top:412.40px;line-height:12px;">42</div>
<div class="t" style="left:854.5px;top:412.40px;line-height:12px;">42</div>
<div class="t" style="left:900.5px;top:412.40px;line-height:12px;">44</div>
<div class="t" style="left:722px;top:429.30px;line-height:12px;">Unique Count :</div>
<div class="t" style="left:808px;top:429.30px;line-height:12px;">2</div>
<div class="t" style="left:854.5px;top:429.30px;line-height:12px;">2</div>
<div class="t" style="left:900.5px;top:429.30px;line-height:12px;">4</div>
<div class="t" style="left:722px;top:446.10px;line-height:12px;">Selected :</div>
<div class="t" style="left:808px;top:446.10px;line-height:12px;">1</div>
<div class="t" style="left:854.5px;top:446.10px;line-height:12px;">1</div>
<div class="t" style="left:900.5px;top:446.10px;line-height:12px;">1</div>
<div class="t" style="left:722px;top:462.40px;line-height:12px;">Graph Scale :</div>
<div class="a" style="left:808px;top:461.25px;width:132.5px;height:12.5px;background:#E6E6E6;border-radius:2px;"></div>
<div class="t" style="left:811px;top:461.6px;line-height:12px;width:116px;overflow:hidden;">Upper quartile of frame time</div>
<div class="a" style="left:929px;top:466.2px;width:0;height:0;border-left:4px solid transparent;border-right:4px solid transparent;border-top:4px solid #333;"></div>
<div class="t" style="left:808px;top:479.90px;line-height:12px;">Median</div>
<div class="t" style="left:854.5px;top:479.90px;line-height:12px;">Thread</div>
<div class="a" style="left:722px;top:495px;width:83.80px;height:12.30px;background:#686868;"></div>
<div class="a" style="left:722px;top:512px;width:83.80px;height:12.30px;background:#686868;"></div>
<div class="a" style="left:742px;top:500.7px;width:60.50px;height:1.10px;background:#C9D8EC;"></div>
<div class="a" style="left:741.5px;top:498.5px;width:1.00px;height:5.00px;background:#C9D8EC;"></div>
<div class="a" style="left:802px;top:497.6px;width:4px;height:7.4px;background:#6A9AD2;border:0.8px solid #DDE8F5;border-radius:1px;box-sizing:border-box;"></div>
<div class="a" style="left:759px;top:517.7px;width:45.00px;height:1.10px;background:#F0C4AC;"></div>
<div class="a" style="left:758.5px;top:515.5px;width:1.00px;height:5.00px;background:#F0C4AC;"></div>
<div class="a" style="left:802.5px;top:514.4px;width:4px;height:7.4px;background:#E07A40;border:0.8px solid #F3C4AA;border-radius:1px;box-sizing:border-box;"></div>
<div class="t" style="left:810px;top:497.90px;line-height:12px;">16.64</div>
<div class="t" style="left:856px;top:497.90px;line-height:12px;">Main Thread</div>
<div class="t" style="left:810px;top:514.90px;line-height:12px;">17.12</div>
<svg class="a" style="left:720.60px;top:544.35px;" width="7.2" height="6.3" viewBox="0 0 7.2 6.3"><path d="M0 0 H7.2 L3.6 6.3 Z" fill="#5E5E5E"/></svg>
<div class="t b" style="left:730.5px;top:542.30px;line-height:12px;">Marker Summary</div>
<div class="t" style="left:722px;top:561.10px;line-height:12px;">PlayerLoop</div>
<div class="t" style="left:722px;top:577.90px;line-height:12px;">Mean frame contribution</div>
<div class="t" style="left:808px;top:594.40px;line-height:12px;">Left</div>
<div class="t" style="left:854.5px;top:594.40px;line-height:12px;">Right</div>
<div class="t" style="left:900.5px;top:594.40px;line-height:12px;">Diff</div>
<div class="a" style="left:722px;top:610px;width:83.80px;height:4.60px;background:#6CA0DA;"></div>
<div class="a" style="left:722px;top:615px;width:83.80px;height:5.60px;background:#EE8852;"></div>
<div class="t" style="left:810px;top:611.10px;line-height:12px;">99.93%</div>
<div class="t" style="left:856px;top:611.10px;line-height:12px;">99.95%</div>
<div class="t" style="left:902px;top:611.10px;line-height:12px;">0.02%</div>
<div class="t" style="left:722px;top:631.10px;line-height:12px;">First frame</div>
<div class="a" style="left:808px;top:629.25px;width:40.25px;height:13.75px;background:#E6E6E6;border-radius:2px;"></div>
<div class="t" style="left:808px;width:40.25px;top:631.10px;line-height:12px;text-align:center;">1</div>
<div class="a" style="left:852.5px;top:629.25px;width:40.50px;height:13.75px;background:#E6E6E6;border-radius:2px;"></div>
<div class="t" style="left:852.5px;width:40.50px;top:631.10px;line-height:12px;text-align:center;">1</div>
<div class="t" style="left:722px;top:648.70px;line-height:12px;">Top</div>
<div class="a" style="left:749px;top:646.75px;width:32.75px;height:13.25px;background:#E4E4E4;border-radius:2px;"></div>
<div class="t" style="left:753px;top:648.28px;line-height:12px;color:#181818;">3</div>
<div class="a" style="left:770.35px;top:651.77px;width:0;height:0;border-left:3.6px solid transparent;border-right:3.6px solid transparent;border-top:4px solid #4A4A4A;"></div>
<div class="t" style="left:788px;top:648.70px;line-height:12px;">by frame costs</div>
<div class="a" style="left:722px;top:664.5px;width:83.80px;height:4.60px;background:#7E7E7E;"></div>
<div class="a" style="left:722px;top:664.5px;width:25.50px;height:4.60px;background:#6CA0DA;"></div>
<div class="a" style="left:722px;top:669.5px;width:83.80px;height:5.60px;background:#EE8852;"></div>
<div class="t" style="left:810px;top:665.60px;line-height:12px;">20.31</div>
<div class="t" style="left:856px;top:665.60px;line-height:12px;">68.64</div>
<div class="t" style="left:902px;top:665.60px;line-height:12px;">48.33</div>
<div class="a" style="left:722px;top:681.25px;width:83.80px;height:4.60px;background:#7E7E7E;"></div>
<div class="a" style="left:722px;top:681.25px;width:24.50px;height:4.60px;background:#6CA0DA;"></div>
<div class="a" style="left:722px;top:686.25px;width:83.80px;height:5.60px;background:#EE8852;"></div>
<div class="t" style="left:810px;top:682.35px;line-height:12px;">20.23</div>
<div class="t" style="left:856px;top:682.35px;line-height:12px;">68.12</div>
<div class="t" style="left:902px;top:682.35px;line-height:12px;">47.89</div>
<div class="a" style="left:722px;top:698.0px;width:83.80px;height:4.60px;background:#7E7E7E;"></div>
<div class="a" style="left:722px;top:698.0px;width:24.50px;height:4.60px;background:#6CA0DA;"></div>
<div class="a" style="left:722px;top:703.0px;width:83.80px;height:5.60px;background:#EE8852;"></div>
<div class="t" style="left:810px;top:699.10px;line-height:12px;">19.89</div>
<div class="t" style="left:856px;top:699.10px;line-height:12px;">68.08</div>
<div class="t" style="left:902px;top:699.10px;line-height:12px;">48.19</div>
<svg class="a" style="left:719px;top:727.1px;" width="128" height="84.00" viewBox="0 0 128 84.00"><rect x="0.50" y="0" width="4.7" height="84.00" fill="#808080"/><rect x="0.50" y="83.00" width="4.7" height="1.00" fill="#6CA0DA"/><rect x="6.78" y="0" width="4.7" height="84.00" fill="#808080"/><rect x="6.78" y="83.00" width="4.7" height="1.00" fill="#B39A98"/><rect x="13.06" y="0" width="4.7" height="84.00" fill="#808080"/><rect x="13.06" y="82.50" width="4.7" height="1.50" fill="#B39A98"/><rect x="19.34" y="0" width="4.7" height="84.00" fill="#808080"/><rect x="19.34" y="17.60" width="4.7" height="24.30" fill="#6CA0DA"/><rect x="19.34" y="41.90" width="4.7" height="42.10" fill="#B39A98"/><rect x="25.62" y="0" width="4.7" height="84.00" fill="#808080"/><rect x="25.62" y="69.40" width="4.7" height="1.80" fill="#6CA0DA"/><rect x="25.62" y="71.20" width="4.7" height="12.80" fill="#B39A98"/><rect x="31.90" y="0" width="4.7" height="84.00" fill="#808080"/><rect x="31.90" y="83.00" width="4.7" height="1.00" fill="#EE8852"/><rect x="38.18" y="0" width="4.7" height="84.00" fill="#808080"/><rect x="38.18" y="83.00" width="4.7" height="1.00" fill="#EE8852"/><rect x="44.46" y="0" width="4.7" height="84.00" fill="#808080"/><rect x="44.46" y="83.00" width="4.7" height="1.00" fill="#EE8852"/><rect x="50.74" y="0" width="4.7" height="84.00" fill="#808080"/><rect x="50.74" y="70.90" width="4.7" height="13.10" fill="#EE8852"/><rect x="57.02" y="0" width="4.7" height="84.00" fill="#808080"/><rect x="57.02" y="75.90" width="4.7" height="8.10" fill="#EE8852"/><rect x="63.30" y="0" width="4.7" height="84.00" fill="#808080"/><rect x="69.58" y="0" width="4.7" height="84.00" fill="#808080"/><rect x="75.86" y="0" width="4.7" height="84.00" fill="#808080"/><rect x="82.14" y="0" width="4.7" height="84.00" fill="#808080"/><rect x="82.14" y="83.00" width="4.7" height="1.00" fill="#EE8852"/><rect x="88.42" y="0" width="4.7" height="84.00" fill="#808080"/><rect x="88.42" y="79.50" width="4.7" height="4.50" fill="#EE8852"/><rect x="94.70" y="0" width="4.7" height="84.00" fill="#808080"/><rect x="94.70" y="83.00" width="4.7" height="1.00" fill="#EE8852"/><rect x="100.98" y="0" width="4.7" height="84.00" fill="#808080"/><rect x="107.26" y="0" width="4.7" height="84.00" fill="#808080"/><rect x="113.54" y="0" width="4.7" height="84.00" fill="#808080"/><rect x="119.82" y="0" width="4.7" height="84.00" fill="#808080"/><rect x="119.82" y="81.00" width="4.7" height="3.00" fill="#EE8852"/></svg>
<div class="t" style="left:719px;top:815.60px;line-height:12px;">4.25</div>
<div class="t" style="right:156.50px;top:815.60px;line-height:12px;text-align:right;">68.64</div>
<svg class="a" style="left:853px;top:727.1px;" width="38" height="83.70" viewBox="0 0 38 83.70"><rect x="0" y="0" width="38" height="83.70" fill="#686868"/><line x1="9.5" y1="63.20" x2="9.5" y2="83.20" stroke="#DDE8F5" stroke-width="1"/><line x1="7.0" y1="63.70" x2="12.0" y2="63.70" stroke="#DDE8F5" stroke-width="1"/><line x1="6.5" y1="82.70" x2="12.5" y2="82.70" stroke="#DDE8F5" stroke-width="1"/><rect x="5.00" y="65.90" width="9" height="3.30" fill="#B8CDE8" stroke="#DDE8F5" stroke-width="1"/><line x1="28.6" y1="0.50" x2="28.6" y2="79.20" stroke="#F3C4AA" stroke-width="1"/><line x1="26.1" y1="1.00" x2="31.1" y2="1.00" stroke="#F3C4AA" stroke-width="1"/><line x1="25.6" y1="78.70" x2="31.6" y2="78.70" stroke="#F3C4AA" stroke-width="1"/><rect x="23.60" y="47.20" width="10" height="20.20" fill="#A04A14" stroke="#F3C4AA" stroke-width="1"/></svg>
<div class="t" style="left:896px;top:726.90px;line-height:12px;">68.64</div>
<div class="t" style="left:896px;top:801.10px;line-height:12px;">4.25</div>
<div class="t" style="left:808px;top:846.90px;line-height:12px;">ms</div>
<div class="t" style="left:854.5px;top:846.90px;line-height:12px;">ms</div>
<div class="t" style="left:900.5px;top:846.90px;line-height:12px;">ms</div>
<div class="t" style="left:722px;top:863.10px;line-height:12px;">Max</div>
<div class="t" style="left:808px;top:863.10px;line-height:12px;">20.31</div>
<div class="t" style="left:854.5px;top:863.10px;line-height:12px;">68.64</div>
<div class="t" style="left:900.5px;top:863.10px;line-height:12px;">48.33</div>
<div class="t" style="left:722px;top:879.82px;line-height:12px;">Upper Quartile</div>
<div class="t" style="left:808px;top:879.82px;line-height:12px;">16.98</div>
<div class="t" style="left:854.5px;top:879.82px;line-height:12px;">32.73</div>
<div class="t" style="left:900.5px;top:879.82px;line-height:12px;">15.75</div>
<div class="t" style="left:722px;top:896.54px;line-height:12px;">Median</div>
<div class="t" style="left:808px;top:896.54px;line-height:12px;">16.64</div>
<div class="t" style="left:854.5px;top:896.54px;line-height:12px;">17.12</div>
<div class="t" style="left:900.5px;top:896.54px;line-height:12px;">0.48</div>
<div class="t" style="left:722px;top:913.26px;line-height:12px;">Mean</div>
<div class="t" style="left:808px;top:913.26px;line-height:12px;">16.42</div>
<div class="t" style="left:854.5px;top:913.26px;line-height:12px;">24.24</div>
<div class="t" style="left:900.5px;top:913.26px;line-height:12px;">7.82</div>
<div class="t" style="left:722px;top:929.98px;line-height:12px;">Lower Quartile</div>
<div class="t" style="left:808px;top:929.98px;line-height:12px;">16.29</div>
<div class="t" style="left:854.5px;top:929.98px;line-height:12px;">16.62</div>
<div class="t" style="left:900.5px;top:929.98px;line-height:12px;">0.33</div>
<div class="t" style="left:722px;top:946.70px;line-height:12px;">Min</div>
<div class="t" style="left:808px;top:946.70px;line-height:12px;">4.25</div>
<div class="t" style="left:854.5px;top:946.70px;line-height:12px;">7.57</div>
<div class="t" style="left:900.5px;top:946.70px;line-height:12px;">3.32</div>
<div class="t" style="left:722px;top:976.10px;line-height:12px;">Individual Max</div>
<div class="t" style="left:808px;top:976.10px;line-height:12px;">20.31</div>
<div class="t" style="left:854.5px;top:976.10px;line-height:12px;">68.64</div>
<div class="t" style="left:900.5px;top:976.10px;line-height:12px;">48.33</div>
<div class="t" style="left:722px;top:992.90px;line-height:12px;">Individual Min</div>
<div class="t" style="left:808px;top:992.90px;line-height:12px;">4.25</div>
<div class="t" style="left:854.5px;top:992.90px;line-height:12px;">7.57</div>
<div class="t" style="left:900.5px;top:992.90px;line-height:12px;">3.32</div>
<div class="a" style="left:958.3px;top:45.8px;width:1.60px;height:966.20px;background:rgba(255,255,255,0.16);"></div>
</div></div>
</body></html>
